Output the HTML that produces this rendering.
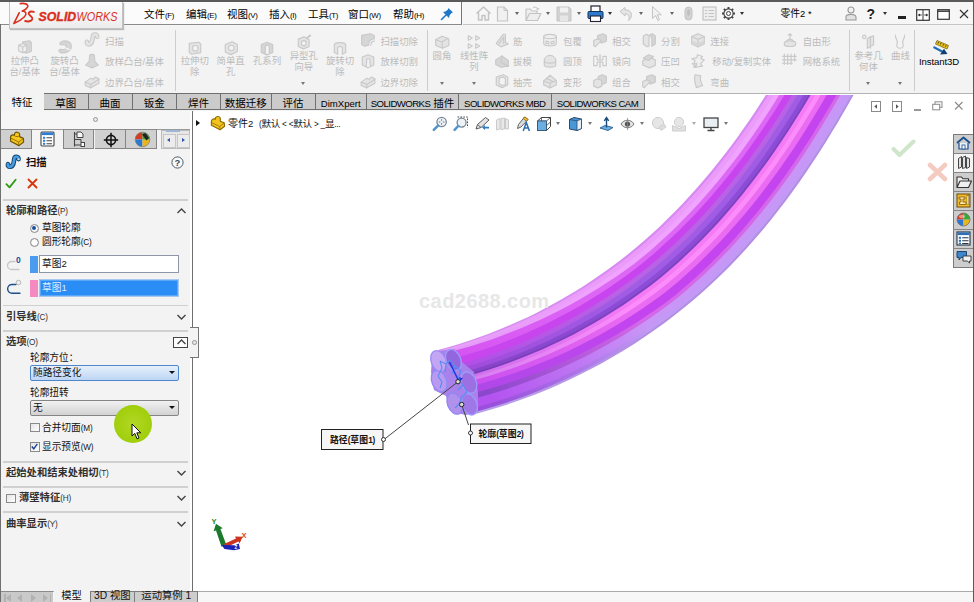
<!DOCTYPE html>
<html><head><meta charset="utf-8"><title>SOLIDWORKS</title>
<style>
*{box-sizing:border-box;margin:0;padding:0}
html,body{width:974px;height:602px;overflow:hidden;background:#fff}
body{position:relative;font-family:"Liberation Sans","Noto Sans CJK SC",sans-serif;font-size:10px;color:#111}
.abs{position:absolute}
#top{position:absolute;left:0;top:0;width:974px;height:26px;background:#f6f6f6;border-top:2px solid #5a5a5a}
#menubox{position:absolute;left:0;top:2px;width:462px;height:23px;background:#fbfbfb;border-bottom:1px solid #8a8a8a;border-right:1px solid #777}
#logo{z-index:3;position:absolute;left:9px;top:2px;width:114px;height:26.5px;background:linear-gradient(#fefefe,#ececec);border:1px solid #c2c2c2;border-top:none;box-shadow:1px 1px 1px #b9b9b9}
.mi{position:absolute;top:7px;font-size:10.5px;line-height:14px;color:#000;white-space:nowrap}
#ribbon{position:absolute;left:0;top:26px;width:974px;height:68px;background:#f3f3f3;border-bottom:1px solid #b4b4b4}
.s{font-size:8.2px;letter-spacing:-0.2px}
.sm{font-size:7.9px;letter-spacing:-0.35px}
.rt{position:absolute;color:#bbb;font-size:9.4px;line-height:12px;white-space:nowrap}
.dar{position:absolute;width:0;height:0;border:2.5px solid transparent;border-top:3px solid #555;border-bottom:none}
.rc{position:absolute;color:#bbb;font-size:9.4px;line-height:12px;text-align:center;width:60px;white-space:nowrap}
.rsep{position:absolute;top:30px;width:1px;height:61px;background:#cdcdcd}
#tabs{position:absolute;left:0;top:93px;width:645px;height:18px;background:#f3f3f3}
.tab{position:absolute;top:0;height:17px;background:#cbcbcb;border:1px solid #707070;border-left:none;font-size:10.5px;line-height:18px;text-align:center;color:#000;white-space:nowrap;overflow:hidden}
.ph{font-size:10.3px;line-height:14px;font-weight:bold;color:#303030;white-space:nowrap}
.ph .s{font-weight:normal}
.pl{font-size:9.7px;line-height:14px;color:#111;white-space:nowrap}
.ct{font-size:8.8px;letter-spacing:0.15px;line-height:14px;font-weight:bold;color:#111;text-align:center;white-space:nowrap}
.bt{top:589.3px;font-size:10.3px;line-height:14px;color:#111;text-align:center;white-space:nowrap;height:12.7px;overflow:hidden}
.tl{font-size:9.6px;letter-spacing:-0.55px}
.tab.act{background:#f3f3f3;border:none;height:18px}
#gfx{position:absolute;left:193px;top:111px;width:781px;height:480px;background:#fff}
#left{position:absolute;left:0;top:111px;width:190px;height:480px;background:#f3f3f3}
</style></head><body>
<div id="gfx"></div><div class="abs" style="left:645px;top:94px;width:329px;height:20px;background:#fff"></div>
<svg class="abs" style="left:0;top:0" width="974" height="602" viewBox="0 0 974 602">
<defs><clipPath id="gc"><rect x="193" y="95" width="781" height="496"/></clipPath></defs>
<g clip-path="url(#gc)">
<defs>
<linearGradient id="tg0" gradientUnits="userSpaceOnUse" x1="457" y1="382" x2="810" y2="94"><stop offset="0.04" stop-color="#d890f0"/><stop offset="0.40" stop-color="#d98af2"/></linearGradient>
<linearGradient id="tg1" gradientUnits="userSpaceOnUse" x1="457" y1="382" x2="810" y2="94"><stop offset="0.04" stop-color="#e8a0f8"/><stop offset="0.40" stop-color="#eb9cfb"/></linearGradient>
<linearGradient id="tg2" gradientUnits="userSpaceOnUse" x1="457" y1="382" x2="810" y2="94"><stop offset="0.04" stop-color="#e498f8"/><stop offset="0.40" stop-color="#f1a4ff"/></linearGradient>
<linearGradient id="tg3" gradientUnits="userSpaceOnUse" x1="457" y1="382" x2="810" y2="94"><stop offset="0.04" stop-color="#d654f2"/><stop offset="0.40" stop-color="#de68f6"/></linearGradient>
<linearGradient id="tg4" gradientUnits="userSpaceOnUse" x1="457" y1="382" x2="810" y2="94"><stop offset="0.04" stop-color="#c846ee"/><stop offset="0.40" stop-color="#c844ee"/></linearGradient>
<linearGradient id="tg5" gradientUnits="userSpaceOnUse" x1="457" y1="382" x2="810" y2="94"><stop offset="0.04" stop-color="#b24ee6"/><stop offset="0.40" stop-color="#b862e6"/></linearGradient>
<linearGradient id="tg6" gradientUnits="userSpaceOnUse" x1="457" y1="382" x2="810" y2="94"><stop offset="0.04" stop-color="#a04cdc"/><stop offset="0.40" stop-color="#a05ce4"/></linearGradient>
<linearGradient id="tg7" gradientUnits="userSpaceOnUse" x1="457" y1="382" x2="810" y2="94"><stop offset="0.04" stop-color="#8844c8"/><stop offset="0.40" stop-color="#8c4cd6"/></linearGradient>
<linearGradient id="tg8" gradientUnits="userSpaceOnUse" x1="457" y1="382" x2="810" y2="94"><stop offset="0.04" stop-color="#7a3cb8"/><stop offset="0.40" stop-color="#7e42c0"/></linearGradient>
<linearGradient id="tg9" gradientUnits="userSpaceOnUse" x1="457" y1="382" x2="810" y2="94"><stop offset="0.04" stop-color="#d070ee"/><stop offset="0.40" stop-color="#f47af6"/></linearGradient>
<linearGradient id="tg10" gradientUnits="userSpaceOnUse" x1="457" y1="382" x2="810" y2="94"><stop offset="0.04" stop-color="#d880f0"/><stop offset="0.40" stop-color="#fd8cfb"/></linearGradient>
<linearGradient id="tg11" gradientUnits="userSpaceOnUse" x1="457" y1="382" x2="810" y2="94"><stop offset="0.04" stop-color="#cc50f0"/><stop offset="0.40" stop-color="#ea6cf2"/></linearGradient>
<linearGradient id="tg12" gradientUnits="userSpaceOnUse" x1="457" y1="382" x2="810" y2="94"><stop offset="0.04" stop-color="#b048e8"/><stop offset="0.40" stop-color="#c444f0"/></linearGradient>
<linearGradient id="tg13" gradientUnits="userSpaceOnUse" x1="457" y1="382" x2="810" y2="94"><stop offset="0.04" stop-color="#8c48cc"/><stop offset="0.40" stop-color="#d468e8"/></linearGradient>
<linearGradient id="tg14" gradientUnits="userSpaceOnUse" x1="457" y1="382" x2="810" y2="94"><stop offset="0.04" stop-color="#b454f0"/><stop offset="0.40" stop-color="#c896f6"/></linearGradient>
<linearGradient id="tg15" gradientUnits="userSpaceOnUse" x1="457" y1="382" x2="810" y2="94"><stop offset="0.04" stop-color="#9a50dc"/><stop offset="0.40" stop-color="#c09af4"/></linearGradient>
<linearGradient id="tg16" gradientUnits="userSpaceOnUse" x1="457" y1="382" x2="810" y2="94"><stop offset="0.04" stop-color="#b8a0e8"/><stop offset="0.40" stop-color="#b48ce2"/></linearGradient>
</defs>
<path d="M438.0 350.0 L448.1 347.2 L458.2 344.2 L468.3 341.0 L478.2 337.6 L488.2 334.0 L498.0 330.1 L509.0 325.6 L518.6 321.3 L528.2 316.9 L537.7 312.2 L547.0 307.3 L556.3 302.3 L565.5 297.1 L575.7 291.0 L584.6 285.4 L593.4 279.6 L602.1 273.6 L610.6 267.5 L619.0 261.2 L627.3 254.7 L636.4 247.2 L644.3 240.4 L652.2 233.5 L659.9 226.4 L667.4 219.1 L674.8 211.7 L682.1 204.2 L690.1 195.5 L697.1 187.7 L704.0 179.8 L710.8 171.8 L717.4 163.6 L723.9 155.3 L730.3 147.0 L737.3 137.4 L743.4 128.8 L749.4 120.2 L755.3 111.4 L761.0 102.6 L766.7 93.7 L772.2 84.7 L778.3 74.5 L783.6 65.3 L788.8 56.1 L793.9 46.9 L798.9 37.6 L803.8 28.2 L808.5 18.8 L813.8 8.2 L816.7 9.7 L811.5 20.3 L806.7 29.7 L801.8 39.1 L796.8 48.4 L791.7 57.7 L786.5 67.0 L781.2 76.1 L775.1 86.4 L769.5 95.4 L763.9 104.3 L758.1 113.2 L752.2 122.0 L746.2 130.7 L740.0 139.3 L733.0 148.9 L726.6 157.4 L720.1 165.7 L713.4 173.9 L706.6 182.0 L699.7 189.9 L692.6 197.8 L684.6 206.5 L677.2 214.1 L669.8 221.5 L662.2 228.9 L654.4 236.0 L646.6 243.0 L638.5 249.9 L629.3 257.4 L620.9 263.8 L612.5 270.1 L603.8 276.2 L595.0 282.2 L586.2 288.0 L577.2 293.6 L566.9 299.6 L557.7 304.8 L548.3 309.8 L538.8 314.6 L529.3 319.3 L519.6 323.7 L509.9 327.9 L498.8 332.4 L488.9 336.2 L479.0 339.8 L468.9 343.2 L458.8 346.3 L449.0 349.2 L439.1 351.8Z" fill="url(#tg0)"/>
<path d="M438.6 350.9 L448.6 348.2 L458.5 345.4 L468.6 342.2 L478.6 338.8 L488.6 335.2 L498.5 331.5 L509.5 327.0 L519.2 322.7 L528.8 318.3 L538.4 313.7 L547.8 308.9 L557.2 303.9 L566.4 298.7 L576.6 292.6 L585.6 287.1 L594.5 281.3 L603.2 275.4 L611.8 269.2 L620.3 263.0 L628.6 256.5 L637.9 249.0 L645.9 242.2 L653.7 235.2 L661.4 228.1 L669.0 220.8 L676.5 213.3 L683.8 205.8 L691.8 197.1 L698.9 189.2 L705.8 181.3 L712.6 173.2 L719.2 165.0 L725.7 156.7 L732.1 148.3 L739.2 138.7 L745.3 130.1 L751.3 121.4 L757.2 112.7 L763.0 103.8 L768.6 94.8 L774.2 85.8 L780.3 75.6 L785.6 66.5 L790.8 57.2 L795.9 47.9 L800.9 38.6 L805.8 29.2 L810.5 19.9 L815.8 9.2 L820.8 11.8 L815.5 22.4 L810.7 31.8 L805.8 41.3 L800.8 50.6 L795.7 59.9 L790.4 69.3 L785.1 78.4 L779.0 88.7 L773.4 97.7 L767.7 106.7 L761.9 115.7 L756.0 124.6 L750.0 133.2 L743.8 141.9 L736.7 151.6 L730.3 160.1 L723.7 168.5 L717.0 176.8 L710.2 184.9 L703.2 193.0 L696.1 201.0 L687.9 209.7 L680.6 217.3 L673.1 224.8 L665.3 232.3 L657.5 239.5 L649.6 246.5 L641.5 253.4 L632.0 261.0 L623.6 267.4 L614.9 273.6 L606.2 279.6 L597.2 285.6 L588.2 291.2 L579.0 296.7 L568.6 302.7 L559.3 307.8 L549.7 312.8 L540.1 317.5 L530.5 322.0 L520.7 326.3 L510.8 330.5 L499.7 334.9 L489.7 338.5 L479.7 342.0 L469.5 345.3 L459.3 348.3 L449.7 351.0 L440.1 353.4Z" fill="url(#tg1)"/>
<path d="M439.5 352.5 L449.3 350.0 L459.0 347.3 L469.2 344.3 L479.4 341.0 L489.4 337.6 L499.3 333.9 L510.5 329.5 L520.3 325.4 L530.1 321.0 L539.7 316.5 L549.2 311.8 L558.8 306.9 L568.1 301.8 L578.5 295.8 L587.6 290.3 L596.6 284.7 L605.6 278.7 L614.3 272.7 L622.9 266.5 L631.4 260.1 L640.8 252.6 L648.9 245.7 L656.8 238.7 L664.6 231.5 L672.3 224.1 L679.8 216.6 L687.1 209.0 L695.3 200.2 L702.4 192.3 L709.4 184.2 L716.2 176.1 L722.9 167.8 L729.4 159.5 L735.8 151.0 L742.9 141.3 L749.1 132.7 L755.1 124.0 L761.0 115.1 L766.8 106.2 L772.5 97.2 L778.1 88.2 L784.2 77.9 L789.5 68.7 L794.8 59.4 L799.9 50.1 L804.9 40.8 L809.8 31.3 L814.6 22.0 L819.8 11.3 L824.8 13.9 L819.6 24.5 L814.8 33.9 L809.8 43.4 L804.8 52.7 L799.6 62.2 L794.3 71.5 L789.1 80.7 L782.8 91.1 L777.3 100.0 L771.6 109.2 L765.7 118.2 L759.8 127.1 L753.8 135.8 L747.6 144.6 L740.4 154.3 L734.0 162.9 L727.4 171.3 L720.6 179.6 L713.8 187.9 L706.8 196.0 L699.5 204.1 L691.3 212.9 L683.9 220.6 L676.3 228.1 L668.4 235.7 L660.6 243.0 L652.6 250.0 L644.4 257.0 L634.8 264.6 L626.2 270.9 L617.4 277.1 L608.5 283.0 L599.3 288.9 L590.1 294.5 L580.9 299.9 L570.4 305.8 L560.9 310.8 L551.1 315.7 L541.5 320.3 L531.7 324.7 L521.9 328.9 L511.8 333.0 L500.6 337.3 L490.5 340.8 L480.4 344.2 L470.1 347.4 L459.8 350.3 L450.5 352.7 L441.0 355.0Z" fill="url(#tg2)"/>
<path d="M440.5 354.1 L450.1 351.8 L459.6 349.3 L469.8 346.4 L480.1 343.2 L490.2 339.9 L500.2 336.3 L511.4 332.0 L521.5 328.0 L531.3 323.8 L541.0 319.4 L550.7 314.8 L560.4 309.9 L569.8 304.9 L580.4 299.0 L589.6 293.6 L598.7 288.0 L607.9 282.1 L616.8 276.2 L625.5 270.0 L634.2 263.7 L643.8 256.1 L651.9 249.2 L659.9 242.1 L667.7 234.9 L675.6 227.4 L683.1 219.8 L690.5 212.2 L698.7 203.4 L706.0 195.3 L712.9 187.2 L719.8 179.0 L726.5 170.6 L733.1 162.2 L739.6 153.7 L746.7 143.9 L752.9 135.2 L758.9 126.5 L764.8 117.6 L770.7 108.6 L776.4 99.5 L781.9 90.5 L788.1 80.1 L793.4 71.0 L798.7 61.6 L803.9 52.2 L808.9 42.9 L813.8 33.4 L818.6 24.0 L823.9 13.4 L828.9 16.0 L823.6 26.6 L818.8 36.0 L813.8 45.6 L808.8 54.9 L803.6 64.4 L798.3 73.8 L793.0 82.9 L786.7 93.4 L781.2 102.4 L775.5 111.6 L769.6 120.7 L763.5 129.7 L757.6 138.3 L751.4 147.2 L744.2 157.0 L737.7 165.6 L731.0 174.1 L724.2 182.5 L717.3 190.8 L710.3 199.0 L702.9 207.2 L694.7 216.1 L687.2 223.9 L679.6 231.4 L671.6 239.1 L663.7 246.4 L655.6 253.6 L647.4 260.5 L637.7 268.3 L629.1 274.8 L620.3 281.1 L611.4 287.3 L602.1 293.4 L593.0 299.2 L583.7 304.8 L573.2 310.9 L563.7 316.0 L553.8 321.2 L544.1 325.9 L534.3 330.5 L524.4 334.9 L514.2 339.2 L502.9 343.6 L492.7 347.3 L482.5 350.8 L472.0 354.2 L461.7 357.3 L453.4 359.6 L445.1 361.7Z" fill="url(#tg3)"/>
<path d="M444.5 360.8 L453.0 358.6 L461.4 356.3 L471.7 353.2 L482.2 349.9 L492.4 346.4 L502.5 342.7 L513.8 338.2 L524.0 333.9 L533.9 329.6 L543.7 325.0 L553.3 320.2 L563.2 315.1 L572.7 309.9 L583.2 303.9 L592.4 298.3 L601.6 292.5 L610.8 286.4 L619.7 280.3 L628.4 274.0 L637.0 267.5 L646.7 259.7 L654.9 252.7 L662.9 245.6 L670.8 238.3 L678.8 230.7 L686.4 223.1 L693.9 215.4 L702.1 206.5 L709.5 198.3 L716.5 190.1 L723.4 181.8 L730.2 173.5 L736.8 165.0 L743.3 156.4 L750.5 146.6 L756.7 137.7 L762.7 129.1 L768.7 120.1 L774.6 111.0 L780.3 101.8 L785.8 92.9 L792.1 82.4 L797.3 73.3 L802.7 63.8 L807.9 54.4 L812.8 45.1 L817.9 35.5 L822.6 26.1 L827.9 15.5 L834.6 19.0 L829.3 29.6 L824.5 38.9 L819.4 48.6 L814.5 57.9 L809.2 67.5 L803.8 77.0 L798.5 86.1 L792.2 96.7 L786.8 105.7 L780.9 115.0 L775.0 124.2 L768.9 133.3 L763.0 141.9 L756.7 150.9 L749.5 160.8 L742.9 169.5 L736.2 178.1 L729.4 186.6 L722.4 195.0 L715.3 203.2 L707.8 211.7 L699.4 220.6 L691.9 228.5 L684.2 236.1 L676.0 244.0 L668.0 251.3 L659.9 258.5 L651.6 265.6 L641.7 273.5 L633.0 280.1 L624.2 286.6 L615.2 292.8 L605.7 299.1 L596.5 305.0 L587.2 310.6 L576.5 316.8 L566.9 322.1 L556.8 327.3 L547.0 332.2 L537.1 336.9 L527.1 341.3 L516.7 345.7 L505.2 350.2 L495.0 354.0 L484.7 357.6 L473.9 361.0 L463.5 364.1 L456.2 366.2 L448.9 368.1Z" fill="url(#tg4)"/>
<path d="M448.4 367.2 L455.8 365.2 L463.2 363.2 L473.6 360.0 L484.4 356.6 L494.7 353.0 L504.9 349.3 L516.3 344.7 L526.7 340.4 L536.7 335.9 L546.6 331.3 L556.4 326.4 L566.4 321.2 L576.0 315.9 L586.6 309.7 L596.0 304.1 L605.2 298.2 L614.6 291.9 L623.5 285.7 L632.3 279.3 L641.0 272.7 L650.9 264.7 L659.2 257.7 L667.3 250.5 L675.3 243.2 L683.4 235.4 L691.1 227.7 L698.7 219.9 L707.0 210.9 L714.5 202.5 L721.6 194.3 L728.5 185.9 L735.3 177.5 L742.0 168.9 L748.6 160.2 L755.8 150.3 L762.1 141.3 L768.0 132.7 L774.1 123.6 L780.0 114.4 L785.8 105.1 L791.3 96.2 L797.6 85.6 L802.9 76.5 L808.3 67.0 L813.5 57.4 L818.5 48.1 L823.6 38.4 L828.4 29.1 L833.7 18.5 L838.6 21.1 L833.3 31.7 L828.6 41.0 L823.4 50.8 L818.5 60.0 L813.1 69.7 L807.7 79.3 L802.5 88.4 L796.1 99.1 L790.6 108.0 L784.8 117.4 L778.8 126.6 L772.7 135.8 L766.8 144.5 L760.5 153.5 L753.2 163.5 L746.6 172.3 L739.8 180.9 L733.0 189.5 L726.0 197.9 L718.8 206.2 L711.2 214.8 L702.8 223.8 L695.2 231.7 L687.5 239.4 L679.2 247.4 L671.1 254.8 L662.9 262.1 L654.5 269.1 L644.5 277.2 L635.7 283.8 L626.8 290.3 L617.8 296.6 L608.2 303.0 L598.9 308.9 L589.4 314.6 L578.7 320.8 L569.1 326.1 L558.8 331.4 L548.9 336.3 L539.0 340.9 L528.9 345.4 L518.2 349.8 L506.7 354.4 L496.4 358.1 L486.0 361.7 L475.1 365.2 L464.6 368.3 L457.9 370.2 L451.2 371.9Z" fill="url(#tg5)"/>
<path d="M450.7 371.0 L457.5 369.2 L464.3 367.3 L474.8 364.2 L485.7 360.7 L496.1 357.2 L506.4 353.4 L517.9 348.9 L528.5 344.4 L538.5 340.0 L548.5 335.3 L558.3 330.4 L568.6 325.1 L578.2 319.8 L588.9 313.6 L598.3 308.0 L607.6 302.1 L617.2 295.7 L626.2 289.4 L635.1 283.0 L643.8 276.3 L653.8 268.3 L662.2 261.2 L670.4 254.0 L678.4 246.6 L686.7 238.7 L694.4 231.0 L702.0 223.1 L710.4 214.1 L718.0 205.5 L725.1 197.2 L732.1 188.8 L739.0 180.3 L745.7 171.6 L752.3 162.8 L759.6 152.9 L765.9 143.9 L771.8 135.2 L777.9 126.1 L783.9 116.8 L789.7 107.5 L795.2 98.5 L801.5 87.9 L806.8 78.8 L812.2 69.2 L817.5 59.5 L822.5 50.3 L827.6 40.5 L832.4 31.2 L837.7 20.6 L843.4 23.6 L838.0 34.1 L833.3 43.4 L828.1 53.3 L823.1 62.5 L817.8 72.3 L812.3 82.0 L807.0 91.0 L800.7 101.8 L795.2 110.8 L789.3 120.2 L783.3 129.5 L777.1 138.8 L771.2 147.4 L764.9 156.5 L757.5 166.6 L750.9 175.5 L744.1 184.2 L737.2 192.8 L730.1 201.3 L722.9 209.7 L715.2 218.5 L706.7 227.6 L699.1 235.5 L691.3 243.3 L682.8 251.4 L674.7 258.8 L666.4 266.2 L657.9 273.3 L647.7 281.5 L638.9 288.1 L629.9 294.6 L620.7 300.9 L610.9 307.3 L601.5 313.2 L592.0 318.9 L581.2 325.1 L571.4 330.4 L561.0 335.8 L551.0 340.6 L540.9 345.3 L530.7 349.7 L519.9 354.2 L508.3 358.7 L497.9 362.5 L487.4 366.0 L476.3 369.5 L465.7 372.5 L459.6 374.2 L453.5 375.7Z" fill="url(#tg6)"/>
<path d="M453.0 374.8 L459.2 373.3 L465.4 371.6 L476.0 368.5 L487.1 365.0 L497.6 361.5 L508.0 357.7 L519.6 353.2 L530.3 348.8 L540.5 344.3 L550.5 339.7 L560.5 334.8 L570.9 329.5 L580.6 324.2 L591.5 318.0 L601.0 312.3 L610.4 306.4 L620.1 300.0 L629.2 293.7 L638.2 287.2 L647.1 280.6 L657.3 272.5 L665.7 265.3 L674.0 258.0 L682.1 250.6 L690.5 242.5 L698.3 234.7 L705.9 226.8 L714.4 217.7 L722.1 209.0 L729.3 200.7 L736.3 192.2 L743.2 183.6 L750.0 174.8 L756.7 166.0 L764.0 155.9 L770.3 146.8 L776.2 138.2 L782.4 129.0 L788.4 119.6 L794.3 110.2 L799.7 101.3 L806.1 90.5 L811.4 81.4 L816.8 71.8 L822.2 62.0 L827.2 52.8 L832.3 43.0 L837.1 33.6 L842.4 23.1 L847.1 25.5 L841.7 36.1 L837.0 45.4 L831.7 55.3 L826.8 64.5 L821.4 74.3 L815.9 84.1 L810.6 93.1 L804.2 104.0 L798.8 112.9 L792.8 122.4 L786.8 131.8 L780.6 141.1 L774.7 149.8 L768.3 158.9 L760.9 169.1 L754.3 178.0 L747.4 186.8 L740.5 195.5 L733.4 204.0 L726.2 212.5 L718.3 221.3 L709.8 230.5 L702.1 238.5 L694.2 246.3 L685.7 254.5 L677.5 262.0 L669.2 269.4 L660.6 276.6 L650.3 284.8 L641.3 291.4 L632.2 297.9 L623.0 304.2 L613.0 310.6 L603.5 316.5 L593.9 322.2 L583.0 328.4 L573.1 333.6 L562.5 339.0 L552.5 343.8 L542.3 348.5 L532.1 352.9 L521.1 357.3 L509.4 361.8 L498.9 365.5 L488.4 369.0 L477.1 372.4 L466.4 375.4 L460.8 376.9 L455.1 378.3Z" fill="url(#tg7)"/>
<path d="M454.5 377.4 L460.4 376.0 L466.2 374.4 L476.8 371.4 L488.0 368.0 L498.6 364.5 L509.1 360.8 L520.7 356.3 L531.7 351.9 L541.9 347.5 L552.0 342.9 L562.1 338.1 L572.6 332.7 L582.5 327.5 L593.4 321.3 L603.0 315.6 L612.5 309.7 L622.4 303.3 L631.6 297.0 L640.7 290.6 L649.6 283.9 L660.0 275.7 L668.5 268.6 L676.8 261.2 L685.0 253.7 L693.5 245.6 L701.3 237.7 L709.0 229.7 L717.5 220.6 L725.3 211.8 L732.6 203.4 L739.7 194.8 L746.6 186.1 L753.4 177.3 L760.1 168.4 L767.4 158.3 L773.8 149.2 L779.7 140.5 L785.9 131.2 L791.9 121.8 L797.9 112.4 L803.3 103.4 L809.7 92.6 L815.0 83.5 L820.5 73.8 L825.9 64.0 L830.8 54.8 L836.0 44.9 L840.8 35.6 L846.1 25.0 L848.7 26.4 L843.4 36.9 L838.6 46.2 L833.4 56.2 L828.4 65.4 L823.0 75.2 L817.5 85.0 L812.3 94.1 L805.8 104.9 L800.4 113.9 L794.4 123.4 L788.4 132.8 L782.2 142.2 L776.3 150.8 L769.9 160.0 L762.5 170.2 L755.8 179.1 L749.0 188.0 L742.0 196.7 L734.9 205.3 L727.6 213.7 L719.7 222.6 L711.2 231.8 L703.5 239.8 L695.6 247.7 L687.0 255.9 L678.8 263.5 L670.4 270.8 L661.9 278.0 L651.4 286.3 L642.4 293.0 L633.3 299.5 L624.1 305.7 L614.0 312.2 L604.5 318.1 L594.9 323.8 L583.9 330.0 L574.0 335.3 L563.4 340.7 L553.3 345.5 L543.1 350.2 L532.8 354.6 L521.8 359.0 L510.0 363.5 L499.5 367.2 L488.9 370.7 L477.6 374.1 L466.9 377.2 L461.5 378.6 L456.0 379.9Z" fill="url(#tg8)"/>
<path d="M455.5 379.0 L461.1 377.6 L466.6 376.2 L477.3 373.2 L488.6 369.7 L499.2 366.2 L509.7 362.5 L521.4 358.1 L532.4 353.6 L542.7 349.2 L552.8 344.6 L562.9 339.7 L573.5 334.4 L583.4 329.1 L594.3 322.9 L604.0 317.2 L613.5 311.3 L623.5 304.9 L632.7 298.6 L641.8 292.1 L650.8 285.5 L661.2 277.2 L669.7 270.0 L678.1 262.7 L686.3 255.1 L694.8 246.9 L702.7 239.1 L710.4 231.1 L718.9 221.9 L726.8 213.0 L734.1 204.6 L741.2 196.0 L748.1 187.3 L754.9 178.5 L761.6 169.6 L769.0 159.4 L775.4 150.2 L781.3 141.6 L787.5 132.3 L793.5 122.8 L799.5 113.3 L804.9 104.4 L811.4 93.5 L816.6 84.5 L822.1 74.7 L827.5 64.9 L832.5 55.7 L837.7 45.7 L842.5 36.4 L847.8 25.9 L852.5 28.3 L847.1 38.8 L842.3 48.1 L837.1 58.1 L832.1 67.3 L826.7 77.2 L821.1 87.1 L815.9 96.2 L809.4 107.1 L804.0 116.0 L798.0 125.6 L791.9 135.1 L785.7 144.5 L779.8 153.1 L773.3 162.4 L765.9 172.6 L759.2 181.6 L752.3 190.5 L745.3 199.3 L738.2 208.0 L730.9 216.5 L722.9 225.5 L714.3 234.8 L706.5 242.8 L698.6 250.7 L689.9 259.1 L681.6 266.6 L673.2 274.1 L664.6 281.3 L654.0 289.6 L644.9 296.3 L635.7 302.7 L626.3 309.0 L616.1 315.5 L606.5 321.4 L596.7 327.0 L585.6 333.2 L575.7 338.4 L564.9 343.8 L554.7 348.5 L544.4 353.1 L534.0 357.5 L522.9 361.9 L511.0 366.3 L500.4 370.0 L489.8 373.4 L478.3 376.8 L467.6 379.7 L462.5 381.0 L457.4 382.1Z" fill="url(#tg9)"/>
<path d="M456.9 381.2 L462.1 380.0 L467.3 378.8 L478.1 375.8 L489.5 372.4 L500.1 369.0 L510.7 365.3 L522.5 360.9 L533.6 356.5 L544.0 352.2 L554.2 347.6 L564.4 342.8 L575.2 337.5 L585.1 332.2 L596.2 326.1 L605.9 320.4 L615.5 314.6 L625.7 308.1 L635.0 301.9 L644.2 295.4 L653.3 288.8 L663.9 280.5 L672.5 273.2 L680.9 265.8 L689.1 258.3 L697.8 250.0 L705.8 242.1 L713.5 234.0 L722.1 224.8 L730.1 215.8 L737.3 207.3 L744.5 198.6 L751.5 189.9 L758.3 181.0 L765.0 172.0 L772.5 161.8 L778.9 152.6 L784.8 143.9 L791.0 134.5 L797.1 125.0 L803.0 115.5 L808.5 106.5 L815.0 95.6 L820.2 86.6 L825.7 76.7 L831.2 66.8 L836.1 57.6 L841.4 47.6 L846.2 38.4 L851.5 27.8 L856.5 30.4 L851.1 40.9 L846.4 50.2 L841.1 60.3 L836.1 69.5 L830.6 79.4 L825.0 89.4 L819.8 98.4 L813.3 109.4 L807.9 118.4 L801.8 128.0 L795.7 137.6 L789.4 147.1 L783.6 155.7 L777.1 165.0 L769.6 175.3 L762.9 184.4 L756.0 193.4 L748.9 202.2 L741.7 210.9 L734.4 219.5 L726.3 228.6 L717.7 237.9 L709.8 246.1 L701.9 254.0 L693.0 262.5 L684.7 270.1 L676.2 277.6 L667.5 284.9 L656.7 293.3 L647.5 299.9 L638.2 306.3 L628.7 312.5 L618.4 319.1 L608.6 324.9 L598.8 330.5 L587.6 336.6 L577.5 341.8 L566.5 347.2 L556.3 351.9 L545.9 356.4 L535.4 360.7 L524.1 365.1 L512.2 369.5 L501.5 373.1 L490.8 376.4 L479.2 379.8 L468.3 382.6 L463.7 383.7 L458.9 384.7Z" fill="url(#tg10)"/>
<path d="M458.4 383.8 L463.3 382.8 L468.1 381.7 L478.9 378.8 L490.4 375.4 L501.2 372.1 L511.8 368.5 L523.7 364.2 L535.0 359.8 L545.5 355.5 L555.8 351.0 L566.1 346.2 L577.0 340.9 L587.1 335.7 L598.2 329.6 L608.1 324.0 L617.8 318.2 L628.1 311.7 L637.6 305.4 L646.9 299.0 L656.1 292.4 L666.8 284.0 L675.5 276.8 L684.0 269.3 L692.3 261.7 L701.1 253.3 L709.1 245.3 L716.9 237.2 L725.5 227.9 L733.6 218.8 L740.9 210.2 L748.1 201.5 L755.1 192.7 L762.0 183.8 L768.8 174.7 L776.2 164.4 L782.7 155.1 L788.6 146.5 L794.8 137.0 L800.9 127.5 L806.9 117.8 L812.4 108.9 L818.9 97.9 L824.1 88.8 L829.7 78.9 L835.2 69.0 L840.1 59.8 L845.4 49.7 L850.2 40.5 L855.6 29.9 L861.2 32.8 L855.9 43.4 L851.1 52.6 L845.7 62.8 L840.8 72.0 L835.2 82.0 L829.6 92.0 L824.4 101.1 L817.8 112.2 L812.4 121.1 L806.3 130.8 L800.2 140.5 L793.9 150.0 L788.0 158.6 L781.5 168.0 L774.0 178.5 L767.2 187.6 L760.2 196.6 L753.1 205.6 L745.9 214.3 L738.5 223.0 L730.3 232.3 L721.6 241.7 L713.7 249.9 L705.7 257.9 L696.7 266.5 L688.3 274.2 L679.7 281.7 L671.0 289.0 L660.0 297.5 L650.7 304.2 L641.3 310.7 L631.7 316.9 L621.2 323.6 L611.4 329.4 L601.4 335.1 L590.2 341.2 L580.0 346.4 L568.8 351.9 L558.5 356.6 L548.0 361.2 L537.5 365.5 L526.0 369.9 L513.9 374.3 L503.2 377.9 L492.3 381.3 L480.5 384.6 L469.6 387.5 L465.7 388.4 L461.6 389.1Z" fill="url(#tg11)"/>
<path d="M461.1 388.2 L465.3 387.4 L469.3 386.5 L480.3 383.7 L492.0 380.3 L502.8 376.9 L513.6 373.3 L525.6 369.0 L537.1 364.5 L547.6 360.2 L558.0 355.7 L568.4 350.9 L579.5 345.5 L589.6 340.3 L600.9 334.2 L610.8 328.5 L620.6 322.7 L631.1 316.1 L640.7 309.8 L650.1 303.3 L659.4 296.7 L670.3 288.2 L679.0 280.9 L687.6 273.3 L695.9 265.7 L704.9 257.1 L712.9 249.1 L720.8 240.9 L729.5 231.6 L737.7 222.3 L745.1 213.7 L752.3 204.9 L759.4 196.0 L766.3 187.0 L773.1 177.8 L780.6 167.4 L787.1 158.1 L793.0 149.4 L799.3 139.9 L805.4 130.3 L811.5 120.5 L816.9 111.6 L823.5 100.5 L828.7 91.5 L834.3 81.5 L839.8 71.5 L844.8 62.3 L850.1 52.2 L854.9 42.9 L860.3 32.3 L868.6 36.7 L863.2 47.2 L858.5 56.5 L853.0 66.7 L848.1 75.9 L842.5 86.1 L836.8 96.2 L831.6 105.2 L824.9 116.5 L819.5 125.4 L813.4 135.2 L807.2 145.0 L800.8 154.7 L795.0 163.3 L788.4 172.8 L780.8 183.4 L773.9 192.6 L766.9 201.8 L759.8 210.8 L752.4 219.7 L745.0 228.5 L736.6 238.0 L727.8 247.5 L719.8 255.8 L711.6 264.0 L702.4 272.7 L693.9 280.5 L685.2 288.1 L676.4 295.5 L665.1 304.2 L655.7 310.9 L646.1 317.4 L636.4 323.8 L625.6 330.5 L615.6 336.4 L605.5 342.1 L594.1 348.2 L583.7 353.4 L572.3 359.0 L561.8 363.7 L551.2 368.3 L540.5 372.6 L528.7 377.1 L516.5 381.4 L505.6 385.0 L494.6 388.3 L482.5 391.7 L471.4 394.5 L468.5 395.0 L465.5 395.5Z" fill="url(#tg12)"/>
<path d="M464.9 394.6 L468.1 394.1 L471.2 393.6 L482.3 390.7 L494.3 387.3 L505.2 384.0 L516.1 380.4 L528.3 376.1 L540.1 371.6 L550.7 367.3 L561.3 362.8 L571.8 358.0 L583.2 352.5 L593.5 347.3 L605.0 341.1 L615.1 335.5 L625.0 329.6 L635.8 322.9 L645.5 316.6 L655.1 310.1 L664.5 303.4 L675.7 294.7 L684.5 287.3 L693.2 279.7 L701.7 271.9 L710.9 263.2 L719.0 255.1 L727.0 246.8 L735.8 237.3 L744.2 227.8 L751.6 219.1 L758.9 210.2 L766.1 201.1 L773.1 192.0 L780.0 182.7 L787.5 172.2 L794.1 162.7 L799.9 154.1 L806.3 144.4 L812.5 134.7 L818.6 124.8 L824.0 115.9 L830.7 104.7 L835.9 95.7 L841.6 85.6 L847.1 75.4 L852.1 66.2 L857.5 56.0 L862.3 46.7 L867.7 36.2 L871.7 38.2 L866.3 48.8 L861.5 58.0 L856.0 68.3 L851.1 77.5 L845.4 87.7 L839.7 97.9 L834.5 106.9 L827.8 118.2 L822.5 127.1 L816.3 137.0 L810.0 146.9 L803.7 156.6 L797.9 165.2 L791.2 174.8 L783.6 185.4 L776.7 194.7 L769.7 203.9 L762.5 213.0 L755.1 221.9 L747.6 230.8 L739.1 240.4 L730.3 249.9 L722.3 258.3 L714.1 266.4 L704.8 275.3 L696.2 283.1 L687.5 290.8 L678.6 298.2 L667.3 307.0 L657.9 313.9 L648.3 320.5 L638.6 327.0 L627.7 333.9 L617.8 339.9 L607.7 345.7 L596.2 352.0 L585.9 357.4 L574.3 363.1 L563.8 368.0 L553.1 372.6 L542.4 377.1 L530.5 381.8 L518.2 386.2 L507.3 389.9 L496.2 393.4 L484.0 396.9 L472.8 399.9 L470.7 400.3 L468.6 400.6Z" fill="url(#tg13)"/>
<path d="M468.0 399.7 L470.3 399.3 L472.6 398.9 L483.7 395.9 L495.9 392.4 L506.9 388.9 L517.9 385.3 L530.1 380.8 L542.0 376.1 L552.7 371.7 L563.3 367.0 L573.9 362.1 L585.4 356.5 L595.7 351.1 L607.1 344.8 L617.2 339.0 L627.2 333.0 L638.0 326.1 L647.7 319.7 L657.2 313.0 L666.6 306.2 L677.9 297.4 L686.8 289.9 L695.5 282.3 L704.1 274.5 L713.3 265.7 L721.5 257.5 L729.5 249.2 L738.3 239.6 L746.8 230.1 L754.3 221.3 L761.6 212.3 L768.8 203.3 L775.9 194.1 L782.8 184.8 L790.4 174.2 L797.0 164.6 L802.8 156.0 L809.2 146.3 L815.4 136.5 L821.6 126.6 L826.9 117.7 L833.6 106.4 L838.8 97.4 L844.5 87.2 L850.1 77.0 L855.1 67.8 L860.5 57.5 L865.3 48.3 L870.7 37.8 L877.4 41.2 L872.0 51.8 L867.2 61.0 L861.7 71.4 L856.7 80.5 L851.0 90.9 L845.3 101.1 L840.1 110.1 L833.3 121.6 L828.0 130.4 L821.8 140.5 L815.5 150.4 L809.0 160.2 L803.3 168.8 L796.6 178.5 L788.9 189.2 L781.9 198.6 L774.8 207.9 L767.6 217.1 L760.2 226.1 L752.6 235.0 L744.0 244.8 L735.1 254.5 L727.0 262.9 L718.7 271.1 L709.2 280.1 L700.6 288.0 L691.8 295.7 L682.8 303.2 L671.3 312.3 L661.9 319.3 L652.3 326.2 L642.6 332.8 L631.6 340.0 L621.6 346.2 L611.5 352.2 L599.9 358.7 L589.5 364.3 L577.8 370.2 L567.2 375.3 L556.5 380.1 L545.7 384.8 L533.5 389.6 L521.1 394.3 L510.1 398.1 L498.9 401.8 L486.4 405.5 L475.1 408.6 L474.4 408.8 L473.6 408.9Z" fill="url(#tg14)"/>
<path d="M473.0 408.0 L474.0 407.8 L474.9 407.6 L486.1 404.5 L498.6 400.8 L509.7 397.2 L520.8 393.3 L533.1 388.7 L545.3 383.8 L556.1 379.2 L566.8 374.3 L577.3 369.3 L589.0 363.3 L599.4 357.8 L610.9 351.3 L621.0 345.3 L631.0 339.1 L642.0 331.9 L651.7 325.3 L661.3 318.5 L670.6 311.4 L682.1 302.4 L691.1 294.9 L699.9 287.2 L708.5 279.3 L717.9 270.3 L726.2 262.1 L734.3 253.7 L743.2 244.1 L751.8 234.3 L759.3 225.4 L766.7 216.4 L774.0 207.2 L781.1 198.0 L788.0 188.6 L795.7 177.9 L802.4 168.2 L808.1 159.6 L814.6 149.8 L820.9 139.9 L827.1 129.9 L832.4 121.0 L839.2 109.6 L844.3 100.6 L850.1 90.3 L855.8 80.0 L860.7 70.9 L866.3 60.5 L871.0 51.3 L876.4 40.7 L880.4 42.8 L875.0 53.3 L870.2 62.5 L864.7 73.0 L859.7 82.1 L854.0 92.5 L848.2 102.8 L843.0 111.8 L836.3 123.3 L830.9 132.2 L824.7 142.3 L818.3 152.2 L811.9 162.1 L806.1 170.7 L799.4 180.4 L791.7 191.2 L784.7 200.7 L777.6 210.0 L770.3 219.2 L762.9 228.3 L755.3 237.3 L746.5 247.2 L737.6 256.9 L729.5 265.3 L721.1 273.6 L711.6 282.7 L702.9 290.6 L694.0 298.4 L685.0 305.9 L673.4 315.1 L664.0 322.2 L654.4 329.1 L644.7 335.8 L633.6 343.1 L623.5 349.4 L613.4 355.5 L601.8 362.0 L591.4 367.7 L579.5 373.7 L568.9 378.8 L558.1 383.8 L547.2 388.4 L534.9 393.4 L522.5 398.1 L511.4 402.0 L500.2 405.7 L487.5 409.5 L476.2 412.7 L476.0 412.7 L475.9 412.7Z" fill="url(#tg15)"/>
<path d="M475.3 411.8 L475.6 411.8 L476.0 411.7 L487.3 408.6 L499.9 404.7 L511.1 401.1 L522.2 397.2 L534.6 392.5 L546.8 387.5 L557.7 382.8 L568.4 377.9 L579.1 372.8 L590.9 366.7 L601.3 361.1 L612.8 354.5 L623.0 348.5 L633.0 342.2 L644.1 334.9 L653.8 328.2 L663.4 321.3 L672.8 314.2 L684.3 305.1 L693.3 297.5 L702.2 289.8 L710.9 281.9 L720.4 272.8 L728.7 264.6 L736.8 256.1 L745.7 246.4 L754.4 236.6 L762.0 227.6 L769.5 218.6 L776.7 209.4 L783.9 200.0 L790.8 190.6 L798.5 179.8 L805.2 170.1 L811.0 161.5 L817.4 151.7 L823.8 141.7 L830.0 131.7 L835.4 122.8 L842.1 111.3 L847.3 102.3 L853.1 92.0 L858.8 81.6 L863.7 72.5 L869.3 62.0 L874.1 52.8 L879.5 42.3 L881.2 43.2 L875.8 53.7 L871.0 62.9 L865.4 73.4 L860.5 82.5 L854.7 92.9 L848.9 103.3 L843.7 112.3 L837.0 123.7 L831.6 132.6 L825.4 142.7 L819.0 152.7 L812.6 162.6 L806.8 171.2 L800.1 180.9 L792.4 191.7 L785.4 201.2 L778.2 210.5 L771.0 219.8 L763.5 228.9 L755.9 237.8 L747.2 247.7 L738.2 257.4 L730.1 265.9 L721.7 274.2 L712.2 283.3 L703.5 291.3 L694.6 299.0 L685.5 306.6 L673.9 315.8 L664.5 322.9 L654.9 329.8 L645.2 336.6 L634.1 343.9 L624.0 350.2 L613.8 356.3 L602.3 362.9 L591.8 368.5 L580.0 374.6 L569.3 379.8 L558.5 384.7 L547.7 389.4 L535.3 394.4 L522.9 399.1 L511.7 403.1 L500.5 406.7 L487.8 410.6 L476.5 413.8 L476.5 413.8 L476.5 413.8Z" fill="url(#tg16)"/>
</g>
<path d="M437 351 L455 349 L462 362 L474 372 L478 392 L478 412 L466 415 L452 412 L446 396 L434 390 L431 372 L432 358Z" fill="#a981ea"/>
<ellipse cx="438.6" cy="361.2" rx="7.3" ry="11" transform="rotate(-22 438.6 361.2)" fill="#c2a6f4" stroke="#9a8af6" stroke-width="1.3"/>
<ellipse cx="439.2" cy="381.2" rx="7.3" ry="11" transform="rotate(-22 439.2 381.2)" fill="#b89bf0" stroke="#9488f4" stroke-width="1.3"/>
<ellipse cx="454.8" cy="403.6" rx="7.3" ry="11" transform="rotate(-22 454.8 403.6)" fill="#b092ec" stroke="#9086f4" stroke-width="1.3"/>
<ellipse cx="453.4" cy="360.0" rx="7.3" ry="11" transform="rotate(-22 453.4 360.0)" fill="#9466de" stroke="#9c9cfa" stroke-width="1.3"/>
<ellipse cx="468.9" cy="382.6" rx="7.3" ry="11" transform="rotate(-22 468.9 382.6)" fill="#9c70e2" stroke="#9c9cfa" stroke-width="1.3"/>
<ellipse cx="469.6" cy="404.4" rx="7.3" ry="11" transform="rotate(-22 469.6 404.4)" fill="#a077e6" stroke="#9c9cfa" stroke-width="1.3"/>
<path d="M440 361 L446 364 L450 360 L455 366 L461 371 L458 379 L463 385 L467 392 L462 397 L459 404 L455 408 M440 361 L442 368 L438 376 L442 382 L440 388 M446 364 L445 372 M455 366 L452 374 M463 385 L458 390" fill="none" stroke="#5b8af3" stroke-width="1.1" stroke-linejoin="round"/>
<path d="M449.5 362 L458.5 380.5" stroke="#1b36e0" stroke-width="1.5"/>
<path d="M459 377 L463 378.5 L460 381Z" fill="#1b36e0"/><path d="M384 439.5 L458 381.7 M461.7 404.5 L468.5 425" stroke="#444" stroke-width="1" fill="none"/>
<circle cx="458" cy="381.7" r="2.2" fill="#ddd" stroke="#222" stroke-width="1"/>
<circle cx="461.7" cy="404.5" r="2.2" fill="#ddd" stroke="#222" stroke-width="1"/>
<rect x="321.5" y="429.5" width="61.5" height="20" fill="#f6f6f6" stroke="#222" stroke-width="1"/>
<rect x="470.5" y="424" width="60.5" height="19.5" fill="#f6f6f6" stroke="#222" stroke-width="1"/>
<circle cx="383.5" cy="439.5" r="2" fill="#fff" stroke="#222" stroke-width="0.9"/>
<circle cx="470.5" cy="433" r="2" fill="#fff" stroke="#222" stroke-width="0.9"/>
</svg>
<div id="top"></div>
<div id="menubox"></div>

<div id="logo"></div>
<svg class="abs" style="left:0;top:0.9px;z-index:4" width="124" height="28" viewBox="0 0 124 28">
 <g fill="none" stroke="#d9301f" stroke-linecap="round" stroke-linejoin="round">
  <path d="M20.3 2.6 C24 1.8,28.8 3,27.6 6 C26.6 8.3,23.8 9.4,22.4 10" stroke-width="1.7"/>
  <path d="M22.4 10 C26.2 10.4,27.2 13,24.2 16 C21.2 19,17 21.4,13.9 22.4 L19.3 11.6" stroke-width="1.6"/>
  <path d="M33.8 10.9 C31 10,28.4 10.8,28.8 12.8 C29.3 15,32.9 15.4,32.3 18 C31.6 20.6,27.6 20.8,25.2 20" stroke-width="1.9"/>
 </g>
 <text x="38.6" y="20.3" font-family="Liberation Sans,sans-serif" font-size="12" font-style="italic" font-weight="bold" fill="#d9301f" stroke="#d9301f" stroke-width="0.35" textLength="37.6" lengthAdjust="spacingAndGlyphs">SOLID</text>
 <text x="76.6" y="20.3" font-family="Liberation Sans,sans-serif" font-size="12" font-style="italic" fill="#d9301f" textLength="41" lengthAdjust="spacingAndGlyphs">WORKS</text>
</svg>
<div class="mi" style="left:144px">文件<span class="sm">(F)</span></div>
<div class="mi" style="left:186px">编辑<span class="sm">(E)</span></div>
<div class="mi" style="left:227px">视图<span class="sm">(V)</span></div>
<div class="mi" style="left:269px">插入<span class="sm">(I)</span></div>
<div class="mi" style="left:308px">工具<span class="sm">(T)</span></div>
<div class="mi" style="left:348px">窗口<span class="sm">(W)</span></div>
<div class="mi" style="left:393px">帮助<span class="sm">(H)</span></div>
<div class="mi" style="left:780.5px;font-size:9.8px">零件<span style="font-size:9.4px">2 *</span></div>
<div id="ribbon"></div>
<svg class="abs" style="left:16.8px;top:39.0px" width="16" height="16" viewBox="0 0 14 14"><path d="M5 2.5 L11 1.5 L12.5 3 L12.5 11 L8 12.5 L5 11Z" fill="#d6d6d6" stroke="#c9c9c9" stroke-width="1" stroke-linejoin="round" stroke-linecap="round"/><path d="M1.5 5.5 L5 4 L8.5 5.5 L8.5 10.5 L5 12 L1.5 10.5Z" fill="#efefef" stroke="#c9c9c9" stroke-width="1" stroke-linejoin="round" stroke-linecap="round"/><path d="M1.5 5.5 L5 7 L8.5 5.5 M5 7 L5 12" fill="none" stroke="#c9c9c9" stroke-width="1" stroke-linejoin="round" stroke-linecap="round"/></svg>
<div class="rc" style="left:-5.2px;top:55.2px">拉伸凸</div>
<div class="rc" style="left:-5.2px;top:66.0px">台/基体</div>
<svg class="abs" style="left:56.5px;top:39.0px" width="16" height="16" viewBox="0 0 14 14"><path d="M3 3 C6 0.5,12 1.5,12.5 6 C13 10.5,7 13.5,2.5 11.5 C1 10.5,1.5 9,3.5 9 C6 10,8 8.5,8 6.5 C8 5,6 4.5,4.5 5.2 C2.5 5.5,2 4,3 3Z" fill="#d6d6d6" stroke="#c9c9c9" stroke-width="1" stroke-linejoin="round" stroke-linecap="round"/><path d="M4 6.5 L11.5 9.5" fill="none" stroke="#f3f3f3" stroke-width="1.2"/></svg>
<div class="rc" style="left:34.5px;top:55.2px">旋转凸</div>
<div class="rc" style="left:34.5px;top:66.0px">台/基体</div>
<svg class="abs" style="left:84.0px;top:32.4px" width="16" height="16" viewBox="0 0 14 14"><path d="M11.6 4.2 C11.4 1.6,8 1.4,7.7 4.2 C7.4 7.2,7.2 10.4,4.4 10.8 C2.9 11,2.2 9.8,2.5 8.6" fill="none" stroke="#c9c9c9" stroke-width="4" stroke-linecap="round"/><path d="M11.6 4.2 C11.4 1.6,8 1.4,7.7 4.2 C7.4 7.2,7.2 10.4,4.4 10.8 C2.9 11,2.2 9.8,2.5 8.6" fill="none" stroke="#e4e4e4" stroke-width="2.2" stroke-linecap="round"/></svg>
<div class="rt" style="left:105.0px;top:35.7px">扫描</div>
<svg class="abs" style="left:84.0px;top:53.0px" width="16" height="16" viewBox="0 0 14 14"><path d="M5 2 C5 1,9 1,9 2 L9.5 7.5 L12.5 10.5 L7 13 L1.5 10.5 L4.5 7.5Z" fill="#d6d6d6" stroke="#c9c9c9" stroke-width="1" stroke-linejoin="round" stroke-linecap="round"/></svg>
<div class="rt" style="left:105.0px;top:56.3px">放样凸台/基体</div>
<svg class="abs" style="left:84.0px;top:73.4px" width="16" height="16" viewBox="0 0 14 14"><path d="M1 8 L6 4.5 L8 5.5 L10 3.5 L13 5 L13 9 L6 13 L1 11Z" fill="#e4e4e4" stroke="#c9c9c9" stroke-width="1" stroke-linejoin="round" stroke-linecap="round"/><path d="M1 8 L6 10 L13 5.5 M6 10 L6 13" fill="none" stroke="#c9c9c9" stroke-width="1" stroke-linejoin="round" stroke-linecap="round"/></svg>
<div class="rt" style="left:105.0px;top:76.7px">边界凸台/基体</div>
<div class="rsep" style="left:175px"></div>
<svg class="abs" style="left:186.8px;top:39.5px" width="16" height="16" viewBox="0 0 14 14"><path d="M2 3 L10.5 2 L12 3.5 L12 11 L4 12.5 L2 11Z" fill="#e4e4e4" stroke="#c9c9c9" stroke-width="1" stroke-linejoin="round" stroke-linecap="round"/><rect x="5" y="5" width="4.5" height="4.5" rx="0.8" fill="#f3f3f3" stroke="#c9c9c9" stroke-width="1" stroke-linejoin="round" stroke-linecap="round"/></svg>
<div class="rc" style="left:164.8px;top:55.1px">拉伸切</div>
<div class="rc" style="left:164.8px;top:65.9px">除</div>
<svg class="abs" style="left:222.6px;top:39.5px" width="16" height="16" viewBox="0 0 14 14"><path d="M2 4 L8 1.5 L12.5 4 L12.5 10 L7 12.8 L2 10.5Z" fill="#e4e4e4" stroke="#c9c9c9" stroke-width="1" stroke-linejoin="round" stroke-linecap="round"/><circle cx="7.3" cy="7" r="2.4" fill="#f3f3f3" stroke="#c9c9c9" stroke-width="1" stroke-linejoin="round" stroke-linecap="round"/></svg>
<div class="rc" style="left:200.6px;top:55.1px">简单直</div>
<div class="rc" style="left:200.6px;top:65.9px">孔</div>
<svg class="abs" style="left:259.0px;top:39.5px" width="16" height="16" viewBox="0 0 14 14"><path d="M2 4 L7 2 L12 4 L12 11 L7 13 L2 11Z" fill="#d6d6d6" stroke="#c9c9c9" stroke-width="1" stroke-linejoin="round" stroke-linecap="round"/><path d="M5.5 12 L5.5 6 C5.5 4,9 4,9 6 L9 12" fill="#f3f3f3" stroke="#c9c9c9" stroke-width="1" stroke-linejoin="round" stroke-linecap="round"/></svg>
<div class="rc" style="left:237.0px;top:55.1px">孔系列</div>
<svg class="abs" style="left:295.8px;top:33.8px" width="16" height="16" viewBox="0 0 14 14"><path d="M2 4.5 L7 2.5 L11.5 5 L11.5 11 L6.5 13 L2 11Z" fill="#e4e4e4" stroke="#c9c9c9" stroke-width="1" stroke-linejoin="round" stroke-linecap="round"/><circle cx="6.8" cy="8" r="2.2" fill="#f3f3f3" stroke="#c9c9c9" stroke-width="1" stroke-linejoin="round" stroke-linecap="round"/><path d="M9 4 L13 0.8" fill="none" stroke="#c9c9c9" stroke-width="1.6"/></svg>
<div class="rc" style="left:273.8px;top:50.4px">异型孔</div>
<div class="rc" style="left:273.8px;top:61.2px">向导</div>
<div class="dar" style="left:301.3px;top:82px;border-top-color:#777"></div>
<svg class="abs" style="left:332.0px;top:39.5px" width="16" height="16" viewBox="0 0 14 14"><path d="M2 4.5 C2 1.5,12 1.5,12 4.5 L12 11 L9 12.5 L9 6.5 L7 5.5 L5 6.5 L5 12.5 L2 11Z" fill="#e4e4e4" stroke="#c9c9c9" stroke-width="1" stroke-linejoin="round" stroke-linecap="round"/></svg>
<div class="rc" style="left:310.0px;top:55.1px">旋转切</div>
<div class="rc" style="left:310.0px;top:65.9px">除</div>
<svg class="abs" style="left:360.0px;top:32.4px" width="16" height="16" viewBox="0 0 14 14"><path d="M1.5 3 L9 1.5 L12.5 3 L12.5 6 C9 6,7.5 8,7.5 11.5 L4 12.5 L1.5 11Z" fill="#d6d6d6" stroke="#c9c9c9" stroke-width="1" stroke-linejoin="round" stroke-linecap="round"/><path d="M12.5 8 C10.5 8,9.5 9.5,9.5 11.5" fill="none" stroke="#c9c9c9" stroke-width="1" stroke-linejoin="round" stroke-linecap="round"/></svg>
<div class="rt" style="left:380.4px;top:35.7px">扫描切除</div>
<svg class="abs" style="left:360.0px;top:53.0px" width="16" height="16" viewBox="0 0 14 14"><path d="M2 3.5 L7 1.5 L12 3.5 L12 10.5 L7 12.8 L2 10.5Z" fill="#e4e4e4" stroke="#c9c9c9" stroke-width="1" stroke-linejoin="round" stroke-linecap="round"/><path d="M5.5 12 L6 5 L8.5 5 L9 12" fill="#f3f3f3" stroke="#c9c9c9" stroke-width="1" stroke-linejoin="round" stroke-linecap="round"/></svg>
<div class="rt" style="left:380.4px;top:56.3px">放样切割</div>
<svg class="abs" style="left:360.0px;top:73.4px" width="16" height="16" viewBox="0 0 14 14"><path d="M1 8 L6 4.5 L8 5.5 L10 3.5 L13 5 L13 9 L6 13 L1 11Z" fill="#e4e4e4" stroke="#c9c9c9" stroke-width="1" stroke-linejoin="round" stroke-linecap="round"/><path d="M1 8 L6 10 L13 5.5 M6 10 L6 13" fill="none" stroke="#c9c9c9" stroke-width="1" stroke-linejoin="round" stroke-linecap="round"/></svg>
<div class="rt" style="left:380.4px;top:76.7px">边界切除</div>
<div class="rsep" style="left:427px"></div>
<svg class="abs" style="left:434.0px;top:33.5px" width="16" height="16" viewBox="0 0 14 14"><path d="M1.5 5 L7 2 L12.5 4 C13 4.5,13 5,13 5.5 L13 10 L7.5 12.5 L1.5 10Z" fill="#e4e4e4" stroke="#c9c9c9" stroke-width="1" stroke-linejoin="round" stroke-linecap="round"/><path d="M1.5 5 L7 7 C8.5 6,11 4.5,12.5 4 M7 7 L7.5 12.5" fill="none" stroke="#c9c9c9" stroke-width="1" stroke-linejoin="round" stroke-linecap="round"/></svg>
<div class="rc" style="left:412.0px;top:50.4px">圆角</div>
<div class="dar" style="left:439.5px;top:82px;border-top-color:#777"></div>
<svg class="abs" style="left:466.0px;top:33.5px" width="16" height="16" viewBox="0 0 14 14"><path d="M2 1.5 L5.5 3.5 L2 5.5Z M8.5 1.5 L12 3.5 L8.5 5.5Z M2 8.5 L5.5 10.5 L2 12.5Z M8.5 8.5 L12 10.5 L8.5 12.5Z" fill="#f3f3f3" stroke="#c9c9c9" stroke-width="1" stroke-linejoin="round" stroke-linecap="round"/></svg>
<div class="rc" style="left:444.0px;top:50.4px">线性阵</div>
<div class="rc" style="left:444.0px;top:61.2px">列</div>
<div class="dar" style="left:471.5px;top:82px;border-top-color:#777"></div>
<svg class="abs" style="left:493.5px;top:32.4px" width="16" height="16" viewBox="0 0 14 14"><path d="M2 10 L8 2 L10 2 L10 9 L12.5 10.5 L6 13Z" fill="#e4e4e4" stroke="#c9c9c9" stroke-width="1" stroke-linejoin="round" stroke-linecap="round"/><path d="M4.5 10 L8.5 4.5 L8.5 10" fill="none" stroke="#c9c9c9" stroke-width="1" stroke-linejoin="round" stroke-linecap="round"/></svg>
<div class="rt" style="left:513.0px;top:35.7px">筋</div>
<svg class="abs" style="left:493.5px;top:53.0px" width="16" height="16" viewBox="0 0 14 14"><path d="M1.5 6 L7 2.5 L12.5 6.5 L12.5 11.5 L6 12.5 L1.5 10Z" fill="#d6d6d6" stroke="#c9c9c9" stroke-width="1" stroke-linejoin="round" stroke-linecap="round"/><path d="M7 2.5 L6 8 L12.5 11.5" fill="none" stroke="#c9c9c9" stroke-width="1" stroke-linejoin="round" stroke-linecap="round"/></svg>
<div class="rt" style="left:513.0px;top:56.3px">拔模</div>
<svg class="abs" style="left:493.5px;top:73.4px" width="16" height="16" viewBox="0 0 14 14"><path d="M2 3.5 L8 1.5 L12 3.5 L12 10.5 L7 12.8 L2 10.5Z" fill="#e4e4e4" stroke="#c9c9c9" stroke-width="1" stroke-linejoin="round" stroke-linecap="round"/><path d="M4.5 4.5 L8 3.5 L10 5 L10 10 L7 11 L4.5 9.5Z" fill="#f3f3f3" stroke="#c9c9c9" stroke-width="1" stroke-linejoin="round" stroke-linecap="round"/></svg>
<div class="rt" style="left:513.0px;top:76.7px">抽壳</div>
<svg class="abs" style="left:542.0px;top:32.4px" width="16" height="16" viewBox="0 0 14 14"><path d="M1.5 4 C1.5 1.5,12.5 1.5,12.5 4 L12.5 10 C12.5 12.8,1.5 12.8,1.5 10Z" fill="#efefef" stroke="#c9c9c9" stroke-width="1" stroke-linejoin="round" stroke-linecap="round"/><path d="M1.5 4 C1.5 6.5,12.5 6.5,12.5 4" fill="none" stroke="#c9c9c9" stroke-width="1" stroke-linejoin="round" stroke-linecap="round"/><path d="M3.5 8 L6 8.5 L6 10.5 L3.5 10Z M8 8.5 L10.5 8 L10.5 10 L8 10.5Z" fill="none" stroke="#c9c9c9" stroke-width="1" stroke-linejoin="round" stroke-linecap="round"/></svg>
<div class="rt" style="left:563.0px;top:35.7px">包覆</div>
<svg class="abs" style="left:542.0px;top:53.0px" width="16" height="16" viewBox="0 0 14 14"><path d="M2 7 C2 0.5,12 0.5,12 7 L12 10.5 C12 13,2 13,2 10.5Z" fill="#e4e4e4" stroke="#c9c9c9" stroke-width="1" stroke-linejoin="round" stroke-linecap="round"/><path d="M2 7 C2 9.5,12 9.5,12 7" fill="none" stroke="#c9c9c9" stroke-width="1" stroke-linejoin="round" stroke-linecap="round"/></svg>
<div class="rt" style="left:563.0px;top:56.3px">圆顶</div>
<svg class="abs" style="left:542.0px;top:73.4px" width="16" height="16" viewBox="0 0 14 14"><path d="M1.5 7 L7 2 L12.5 6.5 L12.5 10.5 L7 13 L1.5 10.5Z" fill="#e4e4e4" stroke="#c9c9c9" stroke-width="1" stroke-linejoin="round" stroke-linecap="round"/><path d="M1.5 7 L7 9 L12.5 6.5 M7 9 L7 13 M4 4.7 L9.5 7.5" fill="none" stroke="#c9c9c9" stroke-width="1" stroke-linejoin="round" stroke-linecap="round"/></svg>
<div class="rt" style="left:563.0px;top:76.7px">变形</div>
<svg class="abs" style="left:591.5px;top:32.4px" width="16" height="16" viewBox="0 0 14 14"><path d="M5 3 L9.5 1.5 L12.5 3 L12.5 8 L8.5 9.5 L5 8Z" fill="#d6d6d6" stroke="#c9c9c9" stroke-width="1" stroke-linejoin="round" stroke-linecap="round"/><path d="M1.5 7.5 L5 6 L8 7.5 L3 12.8 L1.5 12Z" fill="#e4e4e4" stroke="#c9c9c9" stroke-width="1" stroke-linejoin="round" stroke-linecap="round"/></svg>
<div class="rt" style="left:612.0px;top:35.7px">相交</div>
<svg class="abs" style="left:591.5px;top:53.0px" width="16" height="16" viewBox="0 0 14 14"><path d="M1.5 3 L4.5 3 L4.5 6 L6 6 M1.5 11 L4.5 11 L4.5 8 L6 8 M12.5 3 L9.5 3 L9.5 6 L8 6 M12.5 11 L9.5 11 L9.5 8 L8 8 M1.5 3 L1.5 11 M12.5 3 L12.5 11" fill="none" stroke="#c9c9c9" stroke-width="1" stroke-linejoin="round" stroke-linecap="round"/><path d="M7 1 L7 13" stroke="#c9c9c9" stroke-width="1.2"/></svg>
<div class="rt" style="left:612.0px;top:56.3px">镜向</div>
<svg class="abs" style="left:591.5px;top:73.4px" width="16" height="16" viewBox="0 0 14 14"><path d="M5.5 3 L9 1.5 L12.5 3 L12.5 8.5 L9 10 L5.5 8.5Z" fill="#d6d6d6" stroke="#c9c9c9" stroke-width="1" stroke-linejoin="round" stroke-linecap="round"/><path d="M1.5 6.5 L5 5 L8.5 6.5 L8.5 11.5 L5 13 L1.5 11.5Z" fill="#e4e4e4" stroke="#c9c9c9" stroke-width="1" stroke-linejoin="round" stroke-linecap="round"/></svg>
<div class="rt" style="left:612.0px;top:76.7px">组合</div>
<svg class="abs" style="left:640.5px;top:32.4px" width="16" height="16" viewBox="0 0 14 14"><path d="M2 3.5 L5 2 L7 3.5 L7 12.5 L5 12.8 L2 10.5Z" fill="#e4e4e4" stroke="#c9c9c9" stroke-width="1" stroke-linejoin="round" stroke-linecap="round"/><path d="M7.5 2.5 L10 1.5 L12.5 3.5 L12.5 10.5 L9.5 12.5 L9.5 5.5Z" fill="#d6d6d6" stroke="#c9c9c9" stroke-width="1" stroke-linejoin="round" stroke-linecap="round"/></svg>
<div class="rt" style="left:661.0px;top:35.7px">分割</div>
<svg class="abs" style="left:640.5px;top:53.0px" width="16" height="16" viewBox="0 0 14 14"><path d="M1.5 7 L7 3.5 L12.5 6 L12.5 11 L7.5 13 L1.5 10.5Z" fill="#e4e4e4" stroke="#c9c9c9" stroke-width="1" stroke-linejoin="round" stroke-linecap="round"/><path d="M2 4.5 L6.5 1.5 L11 3 L6.5 6.5Z" fill="#d6d6d6" stroke="#c9c9c9" stroke-width="1" stroke-linejoin="round" stroke-linecap="round"/></svg>
<div class="rt" style="left:661.0px;top:56.3px">压凹</div>
<svg class="abs" style="left:640.5px;top:73.4px" width="16" height="16" viewBox="0 0 14 14"><path d="M5 3 L9.5 1.5 L12.5 3 L12.5 8 L8.5 9.5 L5 8Z" fill="#d6d6d6" stroke="#c9c9c9" stroke-width="1" stroke-linejoin="round" stroke-linecap="round"/><path d="M1.5 7.5 L5 6 L8 7.5 L3 12.8 L1.5 12Z" fill="#e4e4e4" stroke="#c9c9c9" stroke-width="1" stroke-linejoin="round" stroke-linecap="round"/></svg>
<div class="rt" style="left:661.0px;top:76.7px">相交</div>
<svg class="abs" style="left:690.0px;top:32.4px" width="16" height="16" viewBox="0 0 14 14"><path d="M1.5 4 L7 1.5 L12.5 4 L12.5 10.5 L7 13 L1.5 10.5Z" fill="#e4e4e4" stroke="#c9c9c9" stroke-width="1" stroke-linejoin="round" stroke-linecap="round"/><path d="M1.5 4 L7 6.5 L12.5 4 M7 6.5 L7 13" fill="none" stroke="#c9c9c9" stroke-width="1" stroke-linejoin="round" stroke-linecap="round"/><path d="M1.5 7.5 L7 10 L12.5 7.5 L12.5 10.5 L7 13 L1.5 10.5Z" fill="#d6d6d6"/></svg>
<div class="rt" style="left:710.3px;top:35.7px">连接</div>
<svg class="abs" style="left:690.0px;top:53.0px" width="16" height="16" viewBox="0 0 14 14"><path d="M6.5 1.5 L11 3 L9.5 5 L12.5 6 L9 9.5 L11 11.5 L5 12.5 L6 9 L3 10 L4.5 6.5 L1.5 5 L6 4Z" fill="#efefef" stroke="#c9c9c9" stroke-width="1" stroke-linejoin="round" stroke-linecap="round"/><path d="M2 9 L5 12.5 M5 12.5 L5 10.5 M5 12.5 L3 12.3" fill="none" stroke="#c9c9c9" stroke-width="1" stroke-linejoin="round" stroke-linecap="round"/></svg>
<div class="rt" style="left:710.3px;top:56.3px"><span style="padding-left:2px">移动/复制实体</span></div>
<svg class="abs" style="left:690.0px;top:73.4px" width="16" height="16" viewBox="0 0 14 14"><path d="M4.5 1.5 L9.5 2.5 C8 5.5,9.5 8,11 11 L5.5 12.8 C5 9.5,3 6,4.5 1.5Z" fill="#e4e4e4" stroke="#c9c9c9" stroke-width="1" stroke-linejoin="round" stroke-linecap="round"/></svg>
<div class="rt" style="left:710.3px;top:76.7px">弯曲</div>
<svg class="abs" style="left:781.7px;top:32.4px" width="16" height="16" viewBox="0 0 14 14"><path d="M2 9.5 C2 7,12 7,12 9.5 L12 11 C12 13.3,2 13.3,2 11Z" fill="#e4e4e4" stroke="#c9c9c9" stroke-width="1" stroke-linejoin="round" stroke-linecap="round"/><path d="M4 8.5 C5 5.5,9 5.5,10 8.5" fill="#d6d6d6" stroke="#c9c9c9" stroke-width="1" stroke-linejoin="round" stroke-linecap="round"/><path d="M7 5.5 L7 1.5 M5.5 3 L7 1.5 L8.5 3" fill="none" stroke="#c9c9c9" stroke-width="1" stroke-linejoin="round" stroke-linecap="round"/></svg>
<div class="rt" style="left:802.7px;top:35.7px">自由形</div>
<svg class="abs" style="left:781.7px;top:53.0px" width="16" height="16" viewBox="0 0 14 14"><path d="M2 1 L2 10 M5 1 L5 10 M8 1 L8 10 M11 1 L11 7 M0.5 3 L12.5 3 M0.5 6 L12.5 6 M0.5 9 L9 9" fill="none" stroke="#c9c9c9" stroke-width="1" stroke-linejoin="round" stroke-linecap="round"/></svg>
<div class="rt" style="left:802.7px;top:56.3px">网格系统</div>
<div class="rsep" style="left:849px"></div>
<svg class="abs" style="left:860.5px;top:34.0px" width="16" height="16" viewBox="0 0 14 14"><path d="M5.5 4 L11 1.5 L11 9.5 L5.5 12.5Z" fill="#e4e4e4" stroke="#c9c9c9" stroke-width="1" stroke-linejoin="round" stroke-linecap="round"/><path d="M8.2 2 L8.2 12.5" fill="none" stroke="#c9c9c9" stroke-width="1" stroke-linejoin="round" stroke-linecap="round"/><circle cx="2.8" cy="2.5" r="1.5" fill="#f3f3f3" stroke="#c9c9c9" stroke-width="1" stroke-linejoin="round" stroke-linecap="round"/></svg>
<div class="rc" style="left:838.5px;top:50.1px">参考几</div>
<div class="rc" style="left:838.5px;top:60.9px">何体</div>
<div class="dar" style="left:866.0px;top:82px;border-top-color:#777"></div>
<svg class="abs" style="left:892.4px;top:34.0px" width="16" height="16" viewBox="0 0 14 14"><path d="M3 1 C3 5,5.5 5.5,4.5 8 C3.5 10.5,4.5 12.5,7 12.5 C9.5 12.5,10.5 10.5,9.5 8 C8.5 5.5,11 5,11 1" fill="none" stroke="#c9c9c9" stroke-width="1" stroke-linejoin="round" stroke-linecap="round"/></svg>
<div class="rc" style="left:870.4px;top:50.1px">曲线</div>
<div class="dar" style="left:897.9px;top:82px;border-top-color:#777"></div>
<div class="rsep" style="left:914px"></div>
<svg class="abs" style="left:932px;top:39px" width="18" height="18" viewBox="0 0 18 18"><path d="M5 1.5 L16.5 6.5 L15 10 L3.5 5Z" fill="#e8c21a" stroke="#7a6410" stroke-width="0.8"/><path d="M6.5 3 L6 4.5 M9 4 L8.5 5.5 M11.5 5.2 L11 6.7 M14 6.3 L13.5 7.8" stroke="#3a3208" stroke-width="0.9"/><path d="M1.5 8 L11 13" stroke="#1f6fb5" stroke-width="2"/><path d="M8 15.5 L15.5 15 L12 9.8Z" fill="#12406e"/></svg>
<div class="abs" style="left:909px;top:55px;width:60px;text-align:center;font-size:9.6px;line-height:13px;color:#000;letter-spacing:-0.1px">Instant3D</div>
<div id="tabs"><div class="tab act" style="left:0.0px;width:44.0px">特征</div>
<div class="tab" style="left:44.0px;width:44.5px">草图</div>
<div class="tab" style="left:88.5px;width:44.0px">曲面</div>
<div class="tab" style="left:132.5px;width:44.5px">钣金</div>
<div class="tab" style="left:177.0px;width:44.0px">焊件</div>
<div class="tab" style="left:221.0px;width:50.5px">数据迁移</div>
<div class="tab" style="left:271.5px;width:44.0px">评估</div>
<div class="tab" style="left:315.5px;width:51.5px"><span class="tl" style="letter-spacing:0">DimXpert</span></div>
<div class="tab" style="left:367.0px;width:92.0px"><span class="tl">SOLIDWORKS</span> 插件<span></span></div>
<div class="tab" style="left:459.0px;width:92.5px"><span class="tl">SOLIDWORKS MBD</span></div>
<div class="tab" style="left:551.5px;width:93.0px"><span class="tl">SOLIDWORKS CAM</span></div></div>
<svg class="abs" style="left:439.0px;top:6.0px" width="16" height="16" viewBox="0 0 16 16"><path d="M9.5 2 L14 6.5 L12.5 7 L10.5 9.5 L10 12 L4 6 L6.5 5.5 L9 3.5Z" fill="#1f77c9"/><path d="M7 9 L2.5 13.5" stroke="#1f77c9" stroke-width="1.6" stroke-linecap="round"/></svg>
<svg class="abs" style="left:475.0px;top:5.0px" width="17" height="17" viewBox="0 0 17 17"><path d="M1.5 8.5 L8.5 2 L15.5 8.5 M3.5 7.5 L3.5 15 L7 15 L7 10.5 L10 10.5 L10 15 L13.5 15 L13.5 7.5" fill="none" stroke="#c4c4c4" stroke-width="1.5" stroke-linejoin="round"/></svg>
<svg class="abs" style="left:496.0px;top:6.0px" width="13" height="16" viewBox="0 0 13 16"><path d="M1.5 1 L8 1 L11.5 4.5 L11.5 15 L1.5 15Z" fill="#f1f1f1" stroke="#c4c4c4" stroke-width="1.2"/><path d="M8 1 L8 4.5 L11.5 4.5" fill="none" stroke="#c4c4c4"/></svg>
<div class="dar" style="left:515.0px;top:12.0px;border-top-color:#666"></div>
<svg class="abs" style="left:525.0px;top:6.0px" width="17" height="16" viewBox="0 0 17 16"><path d="M1 14.5 L1 3 L5.5 3 L7 5 L12 5 L12 7.5 M1 14.5 L4.5 7.5 L16 7.5 L12.5 14.5Z" fill="#eee" stroke="#c4c4c4" stroke-width="1.2" stroke-linejoin="round"/><path d="M8 1.5 C10.5 0.5,12.5 1.5,13 3.5 M13 3.5 L11.3 3 M13 3.5 L14 2" fill="none" stroke="#c4c4c4" stroke-width="1"/></svg>
<div class="dar" style="left:546.0px;top:12.0px;border-top-color:#666"></div>
<svg class="abs" style="left:556.0px;top:6.0px" width="16" height="16" viewBox="0 0 16 16"><path d="M1 1 L13 1 L15 3 L15 15 L1 15Z" fill="#d2d2d2" stroke="#c4c4c4" stroke-width="1"/><rect x="4" y="1.5" width="8" height="5" fill="#f1f1f1"/><rect x="4" y="9.5" width="8" height="5.5" fill="#e6e6e6"/></svg>
<div class="dar" style="left:577.0px;top:12.0px;border-top-color:#666"></div>
<svg class="abs" style="left:587.0px;top:5.0px" width="17" height="18" viewBox="0 0 17 18"><rect x="4" y="1" width="9" height="6" fill="#fff" stroke="#223" stroke-width="1.2"/><rect x="1" y="6.5" width="15" height="7" rx="1" fill="#2b7bd0" stroke="#12304f" stroke-width="1"/><rect x="3.5" y="11" width="10" height="5.5" fill="#fff" stroke="#223" stroke-width="1.1"/></svg>
<div class="dar" style="left:608.0px;top:12.0px;border-top-color:#333"></div>
<svg class="abs" style="left:618.0px;top:6.0px" width="16" height="15" viewBox="0 0 16 15"><path d="M2 5.5 L7 1.5 L7 4 C12 3.5,14.5 7,13 11.5 C12.5 13,11.5 14,10.5 14.5 C12 11,11 8,7 8 L7 10Z" fill="#e4e4e4" stroke="#c4c4c4" stroke-width="1" stroke-linejoin="round"/></svg>
<div class="dar" style="left:639.0px;top:12.0px;border-top-color:#666"></div>
<svg class="abs" style="left:651.0px;top:5.0px" width="12" height="17" viewBox="0 0 12 17"><path d="M1.5 1.5 L1.5 13.5 L4.5 10.5 L6.8 15.5 L8.5 14.7 L6.3 9.8 L10.3 9.8Z" fill="#f1f1f1" stroke="#c4c4c4" stroke-width="1" stroke-linejoin="round"/></svg>
<div class="dar" style="left:669.5px;top:12.0px;border-top-color:#666"></div>
<svg class="abs" style="left:683.5px;top:6.0px" width="9" height="15" viewBox="0 0 9 15"><rect x="1" y="1" width="7" height="13" rx="3.5" fill="#d2d2d2" stroke="#c4c4c4"/><rect x="3.3" y="3.5" width="2.4" height="6" rx="1.2" fill="#bdbdbd"/></svg>
<svg class="abs" style="left:701.5px;top:6.0px" width="15" height="15" viewBox="0 0 15 15"><rect x="1" y="1" width="13" height="13" fill="#eee" stroke="#c4c4c4" stroke-width="1.2"/><path d="M3 4.5 L5 4.5 M3 7.5 L5 7.5 M3 10.5 L5 10.5 M6.5 4.5 L12 4.5 M6.5 7.5 L12 7.5 M6.5 10.5 L12 10.5" stroke="#c4c4c4" stroke-width="1.2"/></svg>
<svg class="abs" style="left:721.0px;top:6.0px" width="15" height="15" viewBox="0 0 15 15"><circle cx="7.5" cy="7.5" r="4.6" fill="none" stroke="#444" stroke-width="1.1"/><circle cx="7.5" cy="7.5" r="2" fill="none" stroke="#444" stroke-width="1"/><g stroke="#444" stroke-width="1.9"><path d="M7.5 1 L7.5 3 M7.5 12 L7.5 14 M1 7.5 L3 7.5 M12 7.5 L14 7.5 M2.9 2.9 L4.3 4.3 M10.7 10.7 L12.1 12.1 M2.9 12.1 L4.3 10.7 M10.7 4.3 L12.1 2.9"/></g></svg>
<div class="dar" style="left:740.0px;top:12.0px;border-top-color:#333"></div>
<svg class="abs" style="left:845.0px;top:6.0px" width="12" height="15" viewBox="0 0 12 15"><circle cx="6" cy="4" r="3" fill="#f1f1f1" stroke="#9a9a9a" stroke-width="1.1"/><path d="M1 14 L1 11 C1 7.5,11 7.5,11 11 L11 14Z" fill="#e2e2e2" stroke="#9a9a9a" stroke-width="1.1"/></svg>
<div class="abs" style="left:866.5px;top:4px;font-size:14px;line-height:20px;font-weight:bold;color:#222">?</div>
<div class="dar" style="left:883.0px;top:12.0px;border-top-color:#333"></div>
<div class="abs" style="left:898px;top:16px;width:8px;height:2.5px;background:#222"></div>
<svg class="abs" style="left:916.0px;top:8.5px" width="14" height="12" viewBox="0 0 14 12"><rect x="0.7" y="0.7" width="12.6" height="10.6" fill="#fff" stroke="#333" stroke-width="1.2"/><path d="M7 0.7 L7 11.3" stroke="#333" stroke-width="1"/><path d="M2.2 6 L5.8 6 M8.2 6 L11.8 6" stroke="#333" stroke-width="0.9"/><path d="M2 6 L4 4.5 L4 7.5Z M12 6 L10 4.5 L10 7.5Z" fill="#333"/></svg>
<svg class="abs" style="left:936.5px;top:8.5px" width="13" height="11" viewBox="0 0 13 11"><rect x="0.7" y="0.7" width="11.6" height="9.6" fill="#fff" stroke="#333" stroke-width="1.2"/><path d="M0.7 2.2 L12.3 2.2" stroke="#333" stroke-width="1.4"/></svg>
<svg class="abs" style="left:959.0px;top:9.0px" width="10" height="10" viewBox="0 0 10 10"><path d="M1 1 L9 9 M9 1 L1 9" stroke="#333" stroke-width="1.2"/></svg>
<div class="abs" style="left:463px;top:24px;width:510px;height:1px;background:#c4c4c4"></div>
<div id="left"></div>
<div class="abs" style="left:1px;top:111px;width:189px;height:18px;background:#f6f6f6"></div>
<div class="abs" style="left:92.5px;top:116.5px;width:5px;height:5px;border:1px solid #999;border-radius:50%;background:#e8e8e8"></div>
<div class="abs" style="left:1px;top:129px;width:189px;height:20px;background:#f3f3f3"></div>
<div class="abs" style="left:1px;top:129px;width:189px;height:1px;background:#9a9a9a"></div>
<div class="abs" style="left:1.0px;top:129px;width:30.8px;height:19.5px;background:#d0d0d0;border:1px solid #858585;border-top:1px solid #8a8a8a;border-left:none;"></div>
<div class="abs" style="left:31.8px;top:130px;width:30.8px;height:20px;background:#f4f4f4"></div>
<div class="abs" style="left:62.6px;top:129px;width:31.9px;height:19.5px;background:#d0d0d0;border:1px solid #858585;border-top:1px solid #8a8a8a;"></div>
<div class="abs" style="left:94.5px;top:129px;width:31.8px;height:19.5px;background:#d0d0d0;border:1px solid #858585;border-top:1px solid #8a8a8a;border-left:none;"></div>
<div class="abs" style="left:126.3px;top:129px;width:31.2px;height:19.5px;background:#d0d0d0;border:1px solid #858585;border-top:1px solid #8a8a8a;border-left:none;"></div>
<svg class="abs" style="left:9px;top:131px" width="16" height="16" viewBox="0 0 16 16"><path d="M1.5 6.2 C1.5 4.2,4 3.2,5.2 4.4 L5.6 2.6 C6.4 0.6,10.2 0.8,10.6 3 L10.6 5.6 L14.4 7.4 L14.6 11 L10 14.6 L1.6 10.2Z" fill="#f5c61c" stroke="#6f5204" stroke-width="1.2" stroke-linejoin="round"/><path d="M2 7.2 L9.6 11 L14.2 7.8 M9.6 11 L10 14.2 M5.4 4.6 C6.6 6,9.4 6,10.4 4.4" fill="none" stroke="#8f6c06" stroke-width="0.9"/></svg>
<svg class="abs" style="left:40px;top:131px" width="15" height="16" viewBox="0 0 15 16"><rect x="1" y="1" width="13" height="14" rx="1" fill="#fff" stroke="#444" stroke-width="1.1"/><rect x="1.5" y="1.5" width="12" height="2.6" fill="#2d7fd6"/><rect x="3" y="5.8" width="2.2" height="2" fill="#2d7fd6"/><rect x="3" y="8.8" width="2.2" height="2" fill="#2d7fd6"/><rect x="3" y="11.8" width="2.2" height="2" fill="#2d7fd6"/><path d="M6.5 6.8 L12 6.8 M6.5 9.8 L12 9.8 M6.5 12.8 L12 12.8" stroke="#444" stroke-width="1.1"/></svg>
<svg class="abs" style="left:72px;top:131px" width="14" height="17" viewBox="0 0 14 17"><path d="M2.5 1 L2.5 15.5 M2.5 3 L5 3 M2.5 8.5 L9 8.5 M2.5 14 L9 14" fill="none" stroke="#444" stroke-width="1.1"/><path d="M5 1 L9 1 L11 3 L11 6.5 L5 6.5Z" fill="#f6f6f6" stroke="#444" stroke-width="1"/><rect x="9" y="11.5" width="3.5" height="4" fill="#fff" stroke="#444" stroke-width="1"/><path d="M9 8.5 L9 11" stroke="#444"/></svg>
<svg class="abs" style="left:103px;top:131.5px" width="16" height="16" viewBox="0 0 16 16"><circle cx="8" cy="8" r="4.6" fill="none" stroke="#111" stroke-width="1.6"/><path d="M8 0.8 L8 15.2 M0.8 8 L15.2 8" stroke="#111" stroke-width="1.5"/></svg>
<svg class="abs" style="left:134px;top:130.5px" width="17" height="17" viewBox="0 0 17 17"><circle cx="8.5" cy="8.5" r="7.3" fill="#e9e9e9"/><path d="M8.5 8.5 L8.5 1.2 A7.3 7.3 0 0 0 1.2 8.5Z" fill="#d83a22"/><path d="M8.5 8.5 L1.2 8.5 A7.3 7.3 0 0 0 8.5 15.8Z" fill="#2b78d4"/><path d="M8.5 8.5 L8.5 15.8 A7.3 7.3 0 0 0 15.8 8.5Z" fill="#e9b51a"/><path d="M8.5 8.5 L15.8 8.5 A7.3 7.3 0 0 0 8.5 1.2Z" fill="#3aa83a"/><path d="M8 3.5 L11.5 2 L15 7 L12.5 9.5Z" fill="#222"/><circle cx="8.5" cy="8.5" r="7.3" fill="none" stroke="#777" stroke-width="0.7"/></svg>
<div class="abs" style="left:161px;top:130px;width:29px;height:19px;background:#e6e6e6;border:1px solid #bbb"></div>
<div class="abs" style="left:166px;top:130px;width:14px;height:2px;background:#9fb6d6"></div>
<div class="abs" style="left:163px;top:134px;width:13px;height:14px;background:#ececec;border:1px solid #c6c6c6"></div>
<div class="abs" style="left:177px;top:134px;width:13px;height:14px;background:#ececec;border:1px solid #c6c6c6"></div>
<div class="abs" style="left:167px;top:138px;width:0;height:0;border:2.5px solid transparent;border-right:3.5px solid #2a55a8;border-left:none"></div>
<div class="abs" style="left:182px;top:138px;width:0;height:0;border:2.5px solid transparent;border-left:3.5px solid #2a55a8;border-right:none"></div>
<svg class="abs" style="left:5px;top:154px" width="17" height="17" viewBox="0 0 17 17"><path d="M13.6 5.2 C13.4 2.2,9.6 1.8,9.2 5 C8.8 8.5,8.6 12.3,5.2 12.8 C3.4 13,2.6 11.6,3 10.2" fill="none" stroke="#17456f" stroke-width="4.6" stroke-linecap="round"/><path d="M13.6 5.2 C13.4 2.2,9.6 1.8,9.2 5 C8.8 8.5,8.6 12.3,5.2 12.8 C3.4 13,2.6 11.6,3 10.2" fill="none" stroke="#469ce0" stroke-width="2.7" stroke-linecap="round"/><ellipse cx="13.6" cy="5.3" rx="1.2" ry="0.8" fill="#cfe8fa"/></svg>
<div class="abs" style="left:26px;top:155.8px;font-size:10.3px;line-height:14px;font-weight:bold;color:#111">扫描</div>
<svg class="abs" style="left:171px;top:155.5px" width="13" height="13" viewBox="0 0 13 13"><circle cx="6.5" cy="6.5" r="5.6" fill="#fafafa" stroke="#4a5a6a" stroke-width="1"/><text x="6.5" y="10" text-anchor="middle" font-family="Liberation Sans,sans-serif" font-size="9.5" font-weight="bold" fill="#3a4a5a">?</text></svg>
<svg class="abs" style="left:4.5px;top:178px" width="12.5" height="11.5" viewBox="0 0 14 13"><path d="M1.5 7 L5 10.5 L12 2" fill="none" stroke="#2f9a14" stroke-width="2.1" stroke-linecap="round" stroke-linejoin="round"/></svg>
<svg class="abs" style="left:27px;top:178px" width="11" height="11" viewBox="0 0 11 11"><path d="M1.5 1.5 L9.5 9.5 M9.5 1.5 L1.5 9.5" stroke="#d8380e" stroke-width="1.9" stroke-linecap="round"/></svg>
<div class="abs" style="left:3px;top:199.1px;width:185px;height:1.6px;background:#d0d0d0"></div>
<div class="abs ph" style="left:6px;top:204.0px">轮廓和路径<span class="s">(P)</span></div>
<svg class="abs" style="left:175.5px;top:207.0px" width="11" height="8" viewBox="0 0 11 8"><path d="M1.5 6 L5.5 2 L9.5 6" fill="none" stroke="#444" stroke-width="1.4"/></svg>
<div class="abs" style="left:29.5px;top:223.5px;width:9px;height:9px;border-radius:50%;border:1px solid #8a8a8a;background:radial-gradient(#fff 40%,#d8d8d8)"></div>
<div class="abs" style="left:32px;top:226.0px;width:4px;height:4px;border-radius:50%;background:#1a4fa0"></div>
<div class="abs pl" style="left:42px;top:221px">草图轮廓</div>
<div class="abs" style="left:29.5px;top:237.5px;width:9px;height:9px;border-radius:50%;border:1px solid #8a8a8a;background:radial-gradient(#fff 40%,#d8d8d8)"></div>
<div class="abs pl" style="left:42px;top:235px">圆形轮廓<span class="s">(C)</span></div>
<svg class="abs" style="left:6px;top:253px" width="18" height="20" viewBox="0 0 18 20"><path d="M9 8.5 L5.5 8.5 A3.8 3.8 0 0 0 5.5 16.5 L13 16.5" fill="none" stroke="#c8c8c8" stroke-width="1.3" stroke-linecap="round"/><text x="10" y="10" font-family="Liberation Sans,sans-serif" font-size="8.5" font-weight="bold" fill="#1a4f9c">0</text></svg>
<div class="abs" style="left:30px;top:255.5px;width:8px;height:17px;background:#4b9bf0"></div>
<div class="abs" style="left:39px;top:255px;width:140px;height:18px;background:#fff;border:1px solid #8f96a8"></div>
<div class="abs pl" style="left:42px;top:257px">草图<span style="font-size:9.5px">2</span></div>
<svg class="abs" style="left:6px;top:278px" width="18" height="20" viewBox="0 0 18 20"><path d="M10 6.5 L6 6.5 A4.3 4.3 0 0 0 6 15.2 L14 15.2" fill="none" stroke="#1d4f8a" stroke-width="1.4" stroke-linecap="round"/><circle cx="12.5" cy="4.5" r="2.3" fill="#eee" stroke="#aaa" stroke-width="0.8"/></svg>
<div class="abs" style="left:30px;top:279.5px;width:8px;height:17px;background:#f58ac0"></div>
<div class="abs" style="left:39px;top:279px;width:140px;height:18px;background:#2a8cf5;border:1px solid #a9c8ee;box-shadow:inset 0 0 0 1px #5aa6f7"></div>
<div class="abs pl" style="left:42px;top:281px;color:#dfeeff">草图<span style="font-size:9.5px">1</span></div>
<div class="abs" style="left:3px;top:304.6px;width:185px;height:1.6px;background:#d0d0d0"></div>
<div class="abs ph" style="left:6px;top:310.0px">引导线<span class="s">(C)</span></div>
<svg class="abs" style="left:175.5px;top:313.0px" width="11" height="8" viewBox="0 0 11 8"><path d="M1.5 2 L5.5 6 L9.5 2" fill="none" stroke="#444" stroke-width="1.4"/></svg>
<div class="abs" style="left:3px;top:330.1px;width:185px;height:1.6px;background:#d0d0d0"></div>
<div class="abs ph" style="left:6px;top:335.0px">选项<span class="s">(O)</span></div>
<div class="abs" style="left:173px;top:336.5px;width:15px;height:11px;border:1px solid #444;background:#fdfdfd"></div>
<svg class="abs" style="left:175.5px;top:338.0px" width="11" height="8" viewBox="0 0 11 8"><path d="M1.5 6 L5.5 2 L9.5 6" fill="none" stroke="#444" stroke-width="1.4"/></svg>
<div class="abs pl" style="left:30px;top:351px">轮廓方位：</div>
<div class="abs" style="left:30px;top:365.0px;width:149px;height:16px;border:1px solid #4f86cc;border-radius:2px;background:linear-gradient(#e6f0fc,#bdd6f4)"></div>
<div class="abs pl" style="left:33px;top:366.0px">随路径变化</div>
<div class="abs" style="left:168.5px;top:371.2px;width:0;height:0;border:3.3px solid transparent;border-top:3.8px solid #111;border-bottom:none"></div>
<div class="abs pl" style="left:30px;top:385.5px">轮廓扭转</div>
<div class="abs" style="left:30px;top:399.5px;width:149px;height:16px;border:1px solid #858585;border-radius:2px;background:linear-gradient(#f2f2f2,#d2d2d2)"></div>
<div class="abs pl" style="left:33px;top:400.5px">无</div>
<div class="abs" style="left:168.5px;top:405.7px;width:0;height:0;border:3.3px solid transparent;border-top:3.8px solid #111;border-bottom:none"></div>
<div class="abs" style="left:30.0px;top:422.6px;width:9.5px;height:9.5px;border:1px solid #8a8a8a;background:linear-gradient(135deg,#e4e4e4,#fff)"></div>
<div class="abs pl" style="left:42px;top:420.5px">合并切面<span class="s">(M)</span></div>
<div class="abs" style="left:30.0px;top:442.1px;width:9.5px;height:9.5px;border:1px solid #8a8a8a;background:linear-gradient(135deg,#e4e4e4,#fff)"></div>
<svg class="abs" style="left:30.3px;top:442.4px" width="9" height="9" viewBox="0 0 9 9"><path d="M1.8 4.5 L3.8 6.8 L7.3 1.8" fill="none" stroke="#1d3f8f" stroke-width="1.4"/></svg>
<div class="abs pl" style="left:42px;top:440px">显示预览<span class="s">(W)</span></div>
<div class="abs" style="left:3px;top:461.1px;width:185px;height:1.6px;background:#d0d0d0"></div>
<div class="abs ph" style="left:6px;top:466.3px">起始处和结束处相切<span class="s">(T)</span></div>
<svg class="abs" style="left:175.5px;top:469.0px" width="11" height="8" viewBox="0 0 11 8"><path d="M1.5 2 L5.5 6 L9.5 2" fill="none" stroke="#444" stroke-width="1.4"/></svg>
<div class="abs" style="left:3px;top:486.1px;width:185px;height:1.6px;background:#d0d0d0"></div>
<div class="abs" style="left:6.0px;top:493.6px;width:9.5px;height:9.5px;border:1px solid #8a8a8a;background:linear-gradient(135deg,#e4e4e4,#fff)"></div>
<div class="abs ph" style="left:19px;top:491.3px">薄壁特征<span class="s">(H)</span></div>
<svg class="abs" style="left:175.5px;top:494.0px" width="11" height="8" viewBox="0 0 11 8"><path d="M1.5 2 L5.5 6 L9.5 2" fill="none" stroke="#444" stroke-width="1.4"/></svg>
<div class="abs" style="left:3px;top:511.1px;width:185px;height:1.6px;background:#d0d0d0"></div>
<div class="abs ph" style="left:6px;top:516.6px">曲率显示<span class="s">(Y)</span></div>
<svg class="abs" style="left:175.5px;top:519.5px" width="11" height="8" viewBox="0 0 11 8"><path d="M1.5 2 L5.5 6 L9.5 2" fill="none" stroke="#444" stroke-width="1.4"/></svg>
<div class="abs" style="left:114px;top:405px;width:38px;height:38px;border-radius:50%;background:radial-gradient(circle,#b2d726 0%,#a4d010 55%,#98cc02 100%)"></div>
<svg class="abs" style="left:131px;top:423px" width="12" height="18" viewBox="0 0 12 18"><path d="M1 1 L1 13 L3.8 10.4 L6 15.8 L8 15 L5.8 9.8 L9.8 9.8Z" fill="#fff" stroke="#111" stroke-width="1" stroke-linejoin="round"/></svg>
<div class="abs" style="left:190px;top:111px;width:2px;height:480px;background:#fff"></div>
<div class="abs" style="left:192px;top:111px;width:1px;height:480px;background:#6e6e6e"></div>
<div class="abs" style="left:190px;top:327px;width:8.5px;height:31px;background:#f3f3f3;border:1px solid #777;border-left:none"></div>
<div class="abs" style="left:192.3px;top:340px;width:4.5px;height:4.5px;border:1px solid #999;border-radius:50%;background:#e4e4e4"></div>
<div class="abs" style="left:196px;top:119.5px;width:0;height:0;border:3.2px solid transparent;border-left:4.5px solid #111;border-right:none"></div>
<svg class="abs" style="left:209.5px;top:115.0px;" width="16" height="16" viewBox="0 0 14 14"><path d="M1.2 5.8 C1.2 4,3 2.8,4.8 3.6 L4.8 2.4 C5.6 0.8,8.6 1,9 2.8 L9 5.4 L12.4 6.8 L12.8 9.8 L8.8 13 L1.2 9Z" fill="#f2c31c" stroke="#8a6a05" stroke-width="1" stroke-linejoin="round"/><path d="M1.6 6.8 L8.4 10 L12.4 7 M8.4 10 L8.8 12.6" fill="none" stroke="#a07c08" stroke-width="0.8"/></svg>
<div class="abs" style="left:228px;top:117.2px;font-size:10px;line-height:14px;color:#111;white-space:nowrap">零件<span style="font-size:9.5px">2</span></div>
<div class="abs" style="left:259px;top:117.2px;font-size:9.6px;line-height:14px;color:#111;white-space:nowrap;letter-spacing:-0.35px"><span class="s">(</span>默认<span class="s"> &lt; &lt;</span>默认<span class="s"> &gt; _</span>显<span class="s">...</span></div>
<svg class="abs" style="left:432.0px;top:115.5px;" width="16" height="16" viewBox="0 0 16 16"><circle cx="9.6" cy="6" r="4.7" fill="#eef3f8" stroke="#7b8794" stroke-width="1.3"/><path d="M6 9.6 L1.8 13.8" stroke="#4f94cf" stroke-width="2.5" stroke-linecap="round"/><path d="M9.6 3.2 L9.6 4.8 M9.6 7.2 L9.6 8.8 M6.8 6 L8.4 6 M10.8 6 L12.4 6" stroke="#6a7480" stroke-width="1"/></svg>
<svg class="abs" style="left:453.0px;top:115.5px;" width="16" height="16" viewBox="0 0 16 16"><circle cx="8.6" cy="6.6" r="4.5" fill="#eef3f8" stroke="#7b8794" stroke-width="1.3"/><path d="M5.2 10 L1.6 13.8" stroke="#4f94cf" stroke-width="2.5" stroke-linecap="round"/><path d="M4.5 1 L14.5 1 L14.5 11.5" fill="none" stroke="#444" stroke-width="1" stroke-dasharray="1.6 1.3"/></svg>
<svg class="abs" style="left:474.0px;top:115.5px;" width="16" height="16" viewBox="0 0 16 16"><path d="M11.5 1.5 L15 4 L7 11.5 L2 13 L3.5 8.5Z" fill="#e4e4e4" stroke="#5c5c5c" stroke-width="1" stroke-linejoin="round"/><path d="M3.5 8.5 L7 11.5" stroke="#5c5c5c" stroke-width="0.9"/><path d="M8 11.5 L11 9 L11 10.7 L15 10.7 L15 12.5 L11 12.5 L11 14Z" fill="#2f7cc4"/></svg>
<svg class="abs" style="left:495.0px;top:115.5px;" width="15" height="16" viewBox="0 0 15 16"><path d="M1.5 4 L5 2.5 L5 13 L1.5 14Z M6 2.5 L9.5 2 L9.5 13 L6 13.5Z M10.5 2.5 L13.5 4 L13.5 13 L10.5 13Z" fill="#e9e9e9" stroke="#c6c6c6" stroke-width="0.9"/></svg>
<svg class="abs" style="left:515.0px;top:115.5px;" width="16" height="16" viewBox="0 0 16 16"><path d="M9.5 1 L13 3.5 L6 11 L2.5 12.5 L3.5 8.5Z" fill="#dcdcdc" stroke="#555" stroke-width="0.9" stroke-linejoin="round"/><path d="M8 2.5 L10 1 L13.2 3.4 L11.5 5.3Z" fill="#f0b428" stroke="#8a6508" stroke-width="0.7"/><path d="M8.2 15 L11.3 6.5 L14.4 15 M9.4 12 L13.2 12" fill="none" stroke="#2d6cb4" stroke-width="1.5"/></svg>
<svg class="abs" style="left:535.5px;top:115.5px;" width="16" height="16" viewBox="0 0 16 16"><path d="M1.5 5 L5.5 1.5 L14.5 1.5 L14.5 10.5 L10.5 14.5 L1.5 14.5Z" fill="#fff" stroke="#444" stroke-width="1"/><path d="M1.5 5 L10.5 5 L14.5 1.5 M10.5 5 L10.5 14.5 M5.5 1.5 L5.5 5 M14.5 6 L10.5 9.5" fill="none" stroke="#444" stroke-width="0.8"/><rect x="1.5" y="5" width="9" height="9.5" fill="#6aaee2" stroke="#3a5a7a" stroke-width="0.9"/></svg>
<div class="dar" style="left:555.5px;top:121.5px;border-top-color:#777"></div>
<svg class="abs" style="left:567.5px;top:115.5px;" width="15" height="16" viewBox="0 0 15 16"><path d="M1.5 3.5 L6 1.5 L13.5 3 L13.5 12.5 L9 14.5 L1.5 13Z" fill="#4a97d8" stroke="#2a4a6a" stroke-width="1"/><path d="M9 4.8 L13.5 3 L13.5 12.5 L9 14.5Z" fill="#e8eef5" stroke="#2a4a6a" stroke-width="0.8"/><path d="M1.5 3.5 L9 4.8" stroke="#2a4a6a" stroke-width="0.8"/></svg>
<div class="dar" style="left:587.5px;top:121.5px;border-top-color:#777"></div>
<svg class="abs" style="left:599.0px;top:115.5px;" width="15" height="16" viewBox="0 0 15 16"><path d="M1 12 L6 9.5 L14 11.5 L9 14.5Z" fill="#6ab0e6" stroke="#2a5a8a" stroke-width="0.9"/><path d="M7.5 11.5 L7.5 2.5 M5.3 4.8 L7.5 1.5 L9.7 4.8" fill="none" stroke="#1a4a7a" stroke-width="1.4"/></svg>
<svg class="abs" style="left:619.5px;top:115.5px;" width="15" height="16" viewBox="0 0 15 16"><path d="M1 8 C4 3,11 3,14 8 C11 13,4 13,1 8Z" fill="#e4e4e4" stroke="#777" stroke-width="1"/><circle cx="7.5" cy="8" r="2.6" fill="#555"/><path d="M7.5 2 L7.5 14" stroke="#888" stroke-width="0.8"/></svg>
<div class="dar" style="left:640.0px;top:121.5px;border-top-color:#777"></div>
<svg class="abs" style="left:651.0px;top:115.5px;" width="16" height="16" viewBox="0 0 16 16"><circle cx="7" cy="7" r="5.6" fill="#e6e6e6" stroke="#cfcfcf"/><path d="M8 11 L13 8 L15 11 L10 14.5Z" fill="#dedede" stroke="#cfcfcf"/></svg>
<svg class="abs" style="left:671.0px;top:115.5px;" width="16" height="16" viewBox="0 0 16 16"><circle cx="8" cy="6" r="4.6" fill="#e6e6e6" stroke="#cfcfcf"/><path d="M1.5 9.5 L8 12.5 L14.5 9.5 L14.5 15 L1.5 15Z" fill="#e0e0e0" stroke="#cfcfcf"/></svg>
<div class="dar" style="left:692.0px;top:121.5px;border-top-color:#aaa"></div>
<svg class="abs" style="left:703.0px;top:116.5px;" width="16" height="15" viewBox="0 0 16 15"><rect x="1" y="1" width="14" height="9.5" fill="#e9eef2" stroke="#444" stroke-width="1.3"/><path d="M8 10.5 L8 13 M4.5 13.5 L11.5 13.5" stroke="#444" stroke-width="1.4"/></svg>
<div class="dar" style="left:723.5px;top:121.5px;border-top-color:#777"></div>
<svg class="abs" style="left:871.0px;top:100.5px;" width="10" height="11" viewBox="0 0 10 11"><rect x="0.5" y="0.5" width="9" height="10" fill="#fff" stroke="#8a8a8a"/><path d="M6 3.3 L3.3 5.5 L6 7.7Z" fill="#555"/></svg>
<svg class="abs" style="left:891.5px;top:100.5px;" width="10" height="11" viewBox="0 0 10 11"><rect x="0.5" y="0.5" width="9" height="10" fill="#fff" stroke="#8a8a8a"/><path d="M4 3.3 L6.7 5.5 L4 7.7Z" fill="#555"/></svg>
<div class="abs" style="left:913.5px;top:108.5px;width:7.5px;height:2px;background:#999"></div>
<svg class="abs" style="left:932.0px;top:100.5px;" width="11" height="10" viewBox="0 0 11 10"><rect x="3" y="0.8" width="7" height="5.5" fill="#fff" stroke="#8a8a8a"/><rect x="0.7" y="3.3" width="7" height="5.5" fill="#fff" stroke="#8a8a8a"/></svg>
<svg class="abs" style="left:953.5px;top:101.0px;" width="10" height="10" viewBox="0 0 10 10"><path d="M1 1 L8.5 8.5 M8.5 1 L1 8.5" stroke="#8a8a8a" stroke-width="1.1"/></svg>
<svg class="abs" style="left:891.0px;top:139.0px;" width="25" height="19" viewBox="0 0 25 19"><path d="M2.5 10 L8.5 16 L22.5 2.5" fill="none" stroke="#cfe6ca" stroke-width="4" stroke-linejoin="round" stroke-linecap="round"/></svg>
<svg class="abs" style="left:927.0px;top:162.0px;" width="21" height="20" viewBox="0 0 21 20"><path d="M3 3 L18 17 M18 3 L3 17" stroke="#f4cbc0" stroke-width="4.5" stroke-linecap="round"/></svg>
<div class="abs" style="left:953px;top:133.5px;width:21px;height:134px;background:#cdcdcd;border:1px solid #7a7a7a;border-right:none"></div>
<div class="abs" style="left:953px;top:152.5px;width:21px;height:1px;background:#858585"></div>
<div class="abs" style="left:953px;top:171.5px;width:21px;height:1px;background:#858585"></div>
<div class="abs" style="left:953px;top:190.5px;width:21px;height:1px;background:#858585"></div>
<div class="abs" style="left:953px;top:209.5px;width:21px;height:1px;background:#858585"></div>
<div class="abs" style="left:953px;top:228.5px;width:21px;height:1px;background:#858585"></div>
<div class="abs" style="left:953px;top:247.5px;width:21px;height:1px;background:#858585"></div>
<div class="abs" style="left:954px;top:153.5px;width:20px;height:18px;background:#f4f4f4"></div>
<svg class="abs" style="left:956.0px;top:136.0px;" width="15" height="14" viewBox="0 0 15 14"><path d="M1 7 L7.5 1.5 L14 7" fill="none" stroke="#1b4f8f" stroke-width="1.8" stroke-linejoin="round"/><path d="M3 7 L3 13 L12 13 L12 7" fill="#e8f0fa" stroke="#1b4f8f" stroke-width="1.2"/><rect x="6" y="9" width="3" height="4" fill="#fff" stroke="#1b4f8f" stroke-width="0.8"/></svg>
<svg class="abs" style="left:957.0px;top:155.0px;" width="14" height="15" viewBox="0 0 14 15"><path d="M1.5 3.5 L4.5 1.5 L4.5 12 L1.5 13.5Z M5.5 2.5 L8.5 1 L8.5 12.5 L5.5 13.5Z M9.5 2.5 L12.5 3.5 L12.5 12 L9.5 13.5Z" fill="#e2e2e2" stroke="#333" stroke-width="0.9"/></svg>
<svg class="abs" style="left:956.0px;top:174.5px;" width="16" height="14" viewBox="0 0 16 14"><path d="M1 12.5 L1 2 L5.5 2 L7 3.8 L12.5 3.8 L12.5 6 M1 12.5 L4 6 L15.5 6 L12.5 12.5Z" fill="#efefef" stroke="#333" stroke-width="1.1" stroke-linejoin="round"/></svg>
<svg class="abs" style="left:956.0px;top:193.0px;" width="15" height="15" viewBox="0 0 15 15"><rect x="1" y="1" width="13" height="13" fill="#f3bd2a" stroke="#6a4a08" stroke-width="1"/><path d="M3 4 L9 4 L9 6 L7 6 L7 9 L10 9 L10 11.5 L3.5 11.5 L3.5 9 L5 9 L5 6 L3 6Z" fill="#fbe29a" stroke="#6a4a08" stroke-width="0.7"/><rect x="11" y="2.5" width="1.8" height="9" fill="#fff" stroke="#6a4a08" stroke-width="0.5"/></svg>
<svg class="abs" style="left:956.0px;top:212.0px;" width="15" height="15" viewBox="0 0 15 15"><circle cx="7.5" cy="7.5" r="6.5" fill="#e9e9e9"/><path d="M7.5 7.5 L7.5 1 A6.5 6.5 0 0 0 1 7.5Z" fill="#d83a22"/><path d="M7.5 7.5 L1 7.5 A6.5 6.5 0 0 0 7.5 14Z" fill="#2b78d4"/><path d="M7.5 7.5 L7.5 14 A6.5 6.5 0 0 0 14 7.5Z" fill="#e9b51a"/><path d="M7.5 7.5 L14 7.5 A6.5 6.5 0 0 0 7.5 1Z" fill="#3aa83a"/><circle cx="7.5" cy="7.5" r="6.5" fill="none" stroke="#666" stroke-width="0.7"/><ellipse cx="6" cy="4.5" rx="3" ry="1.8" fill="#fff" opacity="0.45"/></svg>
<svg class="abs" style="left:956.0px;top:231.0px;" width="15" height="15" viewBox="0 0 15 15"><rect x="1" y="1" width="13" height="13" fill="#fff" stroke="#234" stroke-width="1.1"/><rect x="1.5" y="1.5" width="12" height="2.6" fill="#2d6fb8"/><rect x="2.8" y="5.8" width="2.2" height="2" fill="#2d6fb8"/><rect x="2.8" y="8.8" width="2.2" height="2" fill="#2d6fb8"/><rect x="2.8" y="11.6" width="2.2" height="1.8" fill="#2d6fb8"/><path d="M6.2 6.8 L12.5 6.8 M6.2 9.8 L12.5 9.8 M6.2 12.5 L12.5 12.5" stroke="#234" stroke-width="1.1"/></svg>
<svg class="abs" style="left:955.5px;top:250.0px;" width="16" height="14" viewBox="0 0 16 14"><path d="M1 1.5 L10.5 1.5 L10.5 7.5 L5 7.5 L3 10 L3 7.5 L1 7.5Z" fill="#3b86cc" stroke="#173a63" stroke-width="0.9"/><path d="M7 6 L15 6 L15 11 L13.5 11 L13.5 13.2 L11.5 11 L7 11Z" fill="#f2f2f2" stroke="#333" stroke-width="0.9"/></svg>
<div class="abs" style="left:419px;top:288px;font-size:20px;line-height:26px;font-weight:bold;color:#e7e7e7;letter-spacing:0.45px">cad2688.com</div>
<div class="abs ct" style="left:322px;top:432.5px;width:61px">路径<span class="s">(</span>草图<span class="s">1)</span></div>
<div class="abs ct" style="left:471px;top:427px;width:60px">轮廓<span class="s">(</span>草图<span class="s">2)</span></div>
<svg class="abs" style="left:208.0px;top:512.0px;" width="42" height="42" viewBox="0 0 42 42"><path d="M13.5 34.8 L8 18.5 L5.6 19.2 L8 11.8 L14.8 16.2 L12.4 17 L18.3 32.8Z" fill="#1c7a2c"/><path d="M16 32 L28 26.6 L27 24.6 L34.6 24.8 L31.6 31.4 L30.4 29.6 L18.5 35.2Z" fill="#cc3320"/><path d="M13.6 33 L27 33.2 L30.8 31.4 L32 37 L26 38.2 L16.5 37Z" fill="#1a22b8"/><text x="3.6" y="11.5" font-family="Liberation Sans,sans-serif" font-size="7.5" font-weight="bold" fill="#1f8a2e">Y</text><text x="33.5" y="25.5" font-family="Liberation Sans,sans-serif" font-size="7.5" font-weight="bold" fill="#e0452a">X</text><text x="26.5" y="37" font-family="Liberation Sans,sans-serif" font-size="4.6" font-weight="bold" fill="#fff">Z</text></svg>
<div class="abs" style="left:0;top:591px;width:974px;height:11px;background:#f7f7f7;border-top:1px solid #a9a9a9"></div>
<div class="abs" style="left:1px;top:591px;width:52px;height:11px;background:#c9c9c9;border-top:1px solid #8a8a8a"></div>
<div class="abs" style="left:6px;top:594px;width:0;height:0;border:4px solid transparent;border-right:5px solid #b2b2b2;border-left:none"></div>
<div class="abs" style="left:17px;top:594px;width:0;height:0;border:4px solid transparent;border-right:5px solid #b2b2b2;border-left:none"></div>
<div class="abs" style="left:31px;top:594px;width:0;height:0;border:4px solid transparent;border-left:5px solid #b2b2b2;border-right:none"></div>
<div class="abs" style="left:43px;top:594px;width:0;height:0;border:4px solid transparent;border-left:5px solid #b2b2b2;border-right:none"></div>
<div class="abs" style="left:4px;top:594px;width:1.5px;height:8px;background:#b2b2b2"></div>
<div class="abs" style="left:49.5px;top:594px;width:1.5px;height:8px;background:#b2b2b2"></div>
<div class="abs" style="left:53.5px;top:591px;width:36px;height:11px;background:#f3f3f3"></div>
<div class="abs bt" style="left:53.5px;width:36px;">模型</div>
<div class="abs" style="left:89.5px;top:591px;width:45.5px;height:11px;background:#cdcdcd;border:1px solid #7d7d7d;border-bottom:none"></div>
<div class="abs bt" style="left:89.5px;width:45.5px;">3D 视图</div>
<div class="abs" style="left:135px;top:591px;width:62.5px;height:11px;background:#cdcdcd;border:1px solid #7d7d7d;border-bottom:none;border-left:none"></div>
<div class="abs bt" style="left:135px;width:62.5px;">运动算例 1</div>
<div class="abs" style="left:0;top:24px;width:1px;height:578px;background:#707070"></div>
<div class="abs" style="left:973px;top:2px;width:1px;height:600px;background:#5a5a5a"></div>
</body></html>
